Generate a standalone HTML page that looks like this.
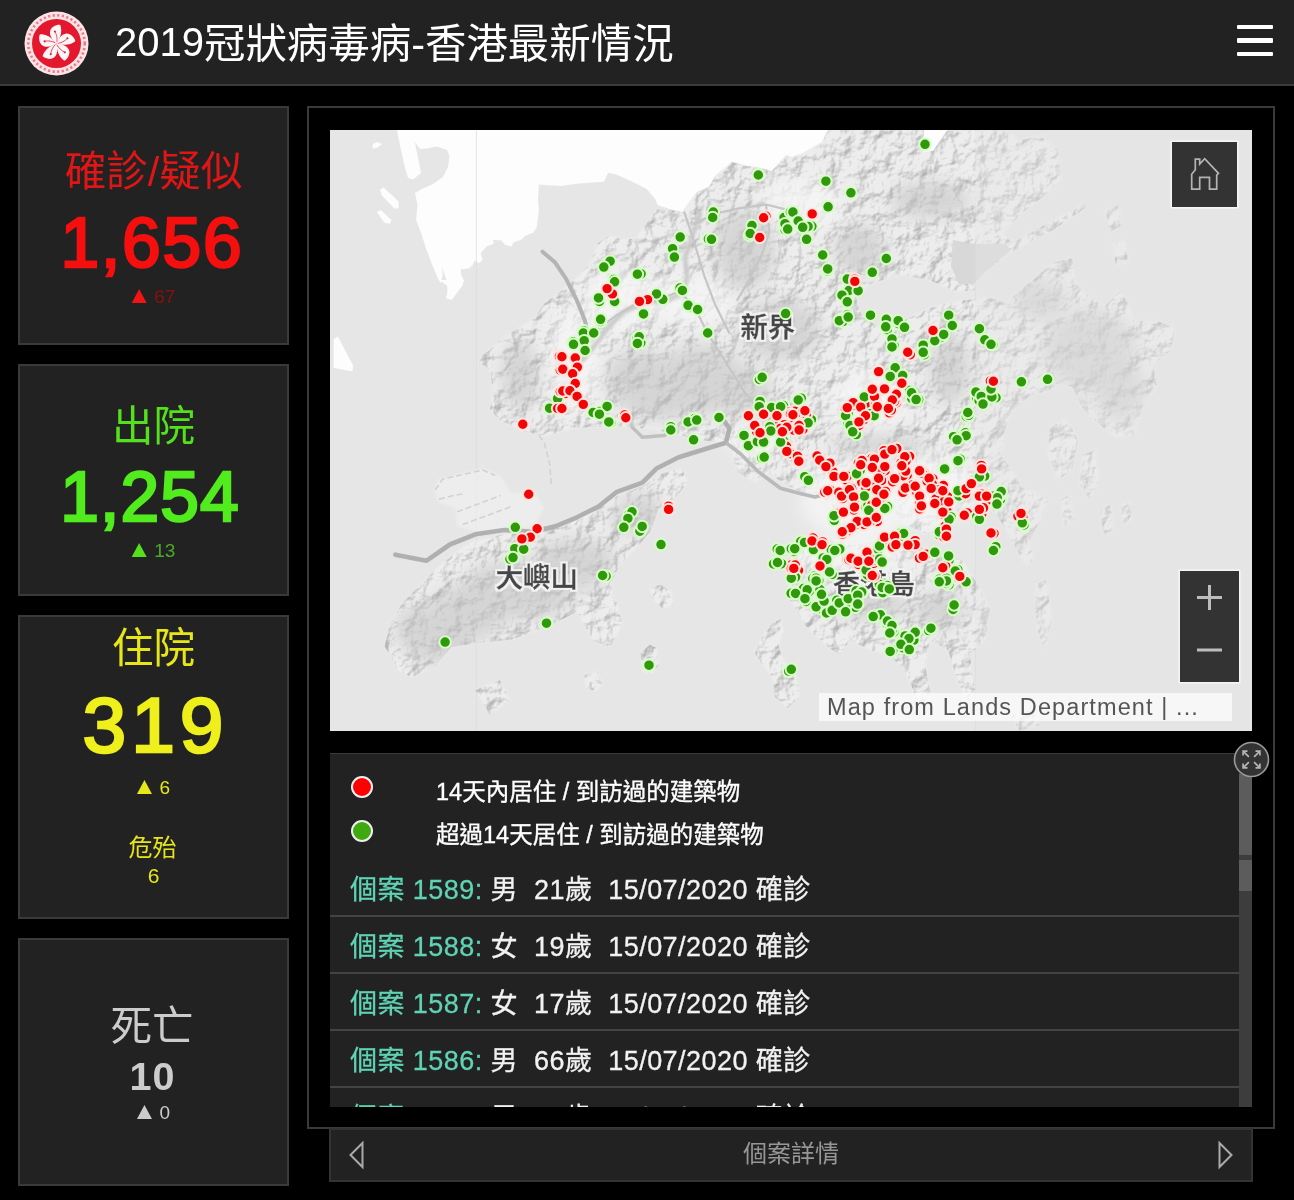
<!DOCTYPE html>
<html lang="zh-Hant">
<head>
<meta charset="utf-8">
<title>2019冠狀病毒病-香港最新情況</title>
<style>
*{box-sizing:border-box;margin:0;padding:0}
html,body{width:1294px;height:1200px;background:#000;overflow:hidden}
body{position:relative;font-family:"Liberation Sans","Noto Sans CJK TC",sans-serif;color:#fff}
.abs{position:absolute}
#hdr{left:0;top:0;width:1294px;height:86px;background:#222;border-bottom:2px solid #3a3a3a}
#title{left:115px;top:16px;font-size:41.45px;line-height:56px;white-space:nowrap;color:#fff;letter-spacing:0}
.burger{left:1237px;width:36px;height:4.6px;background:#fff;border-radius:1px}
.panel{left:18px;width:271px;background:#222;border:2px solid #3a3a3a}
.c{position:absolute;left:0;width:100%;text-align:center;white-space:nowrap}
.lab{font-size:41.5px;line-height:50px}
.num{font-size:69.5px;line-height:70px;font-weight:normal;-webkit-text-stroke:2.6px currentColor;letter-spacing:1.8px}
.sm{font-size:19px;line-height:22px}
.sm i{display:inline-block;width:15px;height:14px;margin-right:7.5px;background:currentColor;clip-path:polygon(50% 0,100% 100%,0 100%);vertical-align:baseline;overflow:hidden;font-size:0;font-style:normal}
#wrap{left:307px;top:106px;width:968px;height:1023px;border:2px solid #3a3a3a;background:#000}
#map{left:330px;top:130px;width:922px;height:601px;background:#e6e6e6;overflow:hidden}
#list{left:330px;top:753px;width:922px;height:354px;background:#222;border-top:1px solid #3a3a3a;overflow:hidden}
.row{position:absolute;left:0;width:909px;height:57px;border-bottom:2px solid #444;font-size:27px;line-height:61px;padding-left:20px;white-space:nowrap;color:#f2f2f2;letter-spacing:.45px;-webkit-text-stroke:.3px}
.row b{font-weight:normal;color:#5fd3b3}
.leg{position:absolute;left:106px;font-size:23.5px;line-height:30px;color:#fff;white-space:nowrap;-webkit-text-stroke:.35px}
.dot{position:absolute;left:20.5px;width:22.5px;height:22.5px;border-radius:50%;border:2px solid #f0f0f0}
#tab{left:329px;top:1128px;width:924px;height:54px;background:#222;border:2px solid #333}
</style>
</head>
<body>
<div id="hdr" class="abs"></div>
<svg class="abs" style="left:24px;top:11px" width="65" height="65" viewBox="-32.5 -32.5 65 65">
<circle r="32" fill="#fbe3e6"/>
<circle r="28.2" fill="none" stroke="#e8566a" stroke-width="2.6" stroke-dasharray="2.2 2.4" opacity=".75"/>
<circle r="24.5" fill="#e3172d"/>
<g id="pet">
<path d="M0 0C-2.2 -2.2 -7.8 -7 -6.3 -12.8C-5.2 -16.4 0 -19.2 3.7 -18.6C5.4 -14.5 4.8 -9 3 -5.5C2.2 -3.5 1 -1.5 0 0Z" fill="#fff5f6"/>
<path d="M0.4 -1.5C0.8 -5 0.4 -8.5 -1.4 -11.6" fill="none" stroke="#e3172d" stroke-width="0.7"/>
<circle cx="-1.6" cy="-12" r="1.05" fill="#c9283a"/>
</g>
<use href="#pet" transform="rotate(72)"/><use href="#pet" transform="rotate(144)"/><use href="#pet" transform="rotate(216)"/><use href="#pet" transform="rotate(288)"/>
</svg>
<div id="title" class="abs"><span style="font-size:40px;position:relative;top:-2.5px">2019</span>冠狀病毒病-香港最新情況</div>
<div class="abs burger" style="top:24.7px"></div>
<div class="abs burger" style="top:38.2px"></div>
<div class="abs burger" style="top:51.7px"></div>

<div class="abs panel" style="top:106px;height:239px;color:#e01616">
  <div class="c lab" style="top:38.5px">確診/疑似</div>
  <div class="c num" style="top:99.5px;left:-1.6px;color:#f50f0f">1,656</div>
  <div class="c sm" style="top:178px;color:#8a1010"><i style="color:#f01414">▲</i>67</div>
</div>
<div class="abs panel" style="top:364px;height:232px;color:#55e01e">
  <div class="c lab" style="top:35.5px">出院</div>
  <div class="c num" style="top:96px;left:-3.5px;letter-spacing:1.1px;color:#52ec1e">1,254</div>
  <div class="c sm" style="top:174px"><i>▲</i><span style="color:#4aaa28">13</span></div>
</div>
<div class="abs panel" style="top:615px;height:304px;color:#e6e619">
  <div class="c lab" style="top:6.5px">住院</div>
  <div class="c num" style="top:66px;left:-.5px;font-size:78.5px;line-height:84px;letter-spacing:5px;text-indent:5px;color:#efef1c">319</div>
  <div class="c sm" style="top:160px"><i>▲</i>6</div>
  <div class="c" style="top:216px;font-size:24px;line-height:30px;left:-1px">危殆</div>
  <div class="c" style="top:246.5px;font-size:21px;line-height:24px">6</div>
</div>
<div class="abs panel" style="top:938px;height:248px;color:#ccc">
  <div class="c lab" style="top:62px;left:-1.5px">死亡</div>
  <div class="c" style="top:113.5px;left:-1px;font-size:39.5px;line-height:44px;font-weight:bold;letter-spacing:1px">10</div>
  <div class="c sm" style="top:162px"><i>▲</i>0</div>
</div>

<div id="wrap" class="abs"></div>
<div id="map" class="abs">
<svg width="922" height="601" viewBox="330 130 922 601" style="position:absolute;left:0;top:0;display:block">
<defs>
<filter id="relief" x="0" y="0" width="100%" height="100%" filterUnits="objectBoundingBox" color-interpolation-filters="sRGB">
<feTurbulence type="fractalNoise" baseFrequency="0.06" numOctaves="4" seed="7" result="n"/>
<feDiffuseLighting in="n" surfaceScale="6" diffuseConstant="1.2" lighting-color="#fff" result="l"><feDistantLight azimuth="225" elevation="52"/></feDiffuseLighting>
<feComposite in="l" in2="SourceAlpha" operator="in"/>
</filter>
<filter id="halo" x="-10%" y="-25%" width="120%" height="150%"><feMorphology in="SourceAlpha" operator="dilate" radius="1.5" result="d"/><feGaussianBlur in="d" stdDeviation="0.5" result="b"/><feFlood flood-color="#f4f4f4" flood-opacity=".95"/><feComposite in2="b" operator="in" result="h"/><feMerge><feMergeNode in="h"/><feMergeNode in="SourceGraphic"/></feMerge></filter>
<filter id="b3"><feGaussianBlur stdDeviation="3"/></filter>
<filter id="b8"><feGaussianBlur stdDeviation="8"/></filter>
<filter id="b1"><feGaussianBlur stdDeviation="0.8"/></filter>
</defs>
<rect x="330" y="130" width="922" height="601" fill="#e6e6e6"/>
<polygon points="476.0,130.0 828.0,130.0 822.0,142.0 803.0,153.0 792.0,157.0 786.0,155.0 772.0,171.0 757.0,167.0 747.0,166.0 732.0,162.0 716.0,175.0 709.0,187.0 697.0,192.0 690.0,201.0 682.0,212.0 668.0,208.5 657.4,205.0 655.6,199.6 646.7,188.9 632.4,181.8 616.3,174.6 608.3,172.8 603.8,181.8 578.9,183.6 561.0,186.0 548.0,185.2 538.9,184.5 538.0,200.0 538.9,210.3 536.6,227.4 533.5,232.4 524.9,236.1 521.2,239.8 513.8,242.3 511.3,246.6 505.1,244.7 501.4,240.4 492.7,239.8 494.0,243.5 486.6,246.6 480.4,253.4 482.8,259.6 479.1,263.3 476.0,261.5" fill="#fdfdfd"/>
<polygon points="397.0,130.0 476.0,130.0 476.0,261.5 474.2,260.8 473.0,264.5 469.2,268.2 460.6,269.5 461.2,274.4 463.7,280.6 460.6,286.8 453.2,296.7 447.6,299.8 447.0,281.8 442.0,267.0 442.7,274.4 440.8,283.1 438.3,279.4 432.1,264.5 426.0,248.4 421.0,232.4 416.1,220.0 417.5,205.0 415.0,193.0 422.0,189.0 433.0,184.0 443.0,177.0 448.0,167.0 449.5,156.0 447.0,150.0 437.0,146.5 427.0,148.5 420.0,149.0 414.0,141.0 412.0,136.0 415.0,143.0 418.5,160.0 421.0,173.0 413.0,179.5 408.0,178.0 404.5,166.0 400.5,148.0" fill="#fdfdfd"/>
<polygon points="372.5,144.3 376.8,142.1 382.1,143.9 376.8,147.9 372.8,148.6" fill="#fdfdfd"/>
<polygon points="380.0,189.8 383.6,187.5 398.7,201.4 398.7,208.5 394.3,208.5 381.8,195.2" fill="#fdfdfd"/>
<polygon points="376.8,212.1 380.9,210.0 391.6,220.2 389.8,223.7 384.4,222.8" fill="#fdfdfd"/>
<polygon points="333.6,338.9 338.0,336.8 353.2,365.7 352.3,371.4 333.6,367.8" fill="#fdfdfd"/>
<polygon points="439.3,280.0 463.9,280.0 462.5,285.4 451.7,300.0 446.0,297.9 449.2,287.1 444.3,283.6" fill="#fdfdfd"/>
<polygon points="924,130 947,130 933,151 923,152" fill="#fdfdfd"/>
<line x1="476.4" y1="130" x2="476.4" y2="731" stroke="#dadada" stroke-width="1" opacity=".7"/>
<line x1="975.5" y1="130" x2="975.5" y2="731" stroke="#dedede" stroke-width="1"/>
<clipPath id="landclip">
<polygon points="658.0,208.0 682.0,212.0 690.0,201.0 697.0,192.0 709.0,187.0 716.0,175.0 732.0,162.0 747.0,166.0 757.0,167.0 772.0,171.0 786.0,155.0 792.0,157.0 803.0,153.0 822.0,142.0 828.0,130.0 924.0,130.0 923.0,152.0 933.0,151.0 947.0,131.0 1000.0,130.0 1015.0,136.0 1030.0,150.0 1045.0,165.0 1060.0,170.0 1062.0,178.0 1045.0,195.0 1020.0,215.0 1003.0,233.0 1012.0,243.0 1050.0,222.0 1085.0,203.0 1086.0,208.0 1050.0,232.0 1012.0,252.0 992.0,266.0 973.0,284.0 975.0,290.0 955.0,292.0 930.0,280.0 900.0,275.0 872.0,283.0 856.0,298.0 862.0,316.0 880.0,328.0 905.0,320.0 935.0,306.0 960.0,301.0 985.0,297.0 1006.0,302.0 1028.0,284.0 1054.0,262.0 1072.0,258.0 1076.0,284.0 1091.0,299.0 1105.0,306.0 1120.0,291.0 1127.0,302.0 1135.0,321.0 1157.0,321.0 1175.0,328.0 1171.0,350.0 1153.0,365.0 1157.0,387.0 1142.0,409.0 1135.0,434.0 1116.0,438.0 1098.0,423.0 1083.0,409.0 1072.0,387.0 1061.0,383.0 1047.0,391.0 1030.0,396.0 1013.0,410.0 1005.0,430.0 1001.0,455.0 1012.0,470.0 1022.0,488.0 1036.0,492.0 1048.0,502.0 1040.0,520.0 1030.0,540.0 1034.0,560.0 1026.0,566.0 1014.0,545.0 1000.0,520.0 985.0,500.0 965.0,505.0 950.0,520.0 930.0,535.0 905.0,525.0 890.0,505.0 875.0,512.0 868.0,530.0 852.0,538.0 838.0,528.0 832.0,505.0 818.0,495.0 800.0,492.0 785.0,484.0 770.0,474.0 755.0,466.0 740.0,455.0 726.0,443.0 700.0,440.0 668.0,432.0 640.0,428.0 610.0,426.0 575.0,428.0 545.0,436.0 522.0,431.0 500.0,420.0 490.0,410.0 493.0,392.0 490.0,370.0 479.0,362.0 483.0,355.0 504.0,337.0 533.0,319.0 544.0,304.0 562.0,290.0 580.0,275.0 591.0,261.0 598.0,243.0 610.0,235.0 621.0,239.0 635.0,239.0 646.0,224.0"/>
<polygon points="399.0,671.6 384.5,646.2 389.9,624.4 402.6,602.6 424.4,580.8 439.0,566.3 468.0,542.7 504.3,534.3 533.4,531.8 562.5,527.1 584.3,513.6 613.3,498.0 642.4,485.7 664.2,472.6 682.3,468.9 687.8,482.7 675.1,498.0 658.7,508.2 651.4,530.0 638.7,545.2 620.6,564.5 610.4,584.4 616.9,602.6 622.4,624.4 609.7,648.0 593.3,640.7 584.3,624.4 577.0,611.7 547.9,626.2 511.6,639.7 475.3,643.3 451.7,646.9 433.5,668.0 411.7,677.1"/>
<polygon points="786.0,560.0 800.0,545.0 830.0,540.0 860.0,544.0 890.0,540.0 915.0,545.0 940.0,552.0 962.0,560.0 978.0,585.0 990.0,610.0 985.0,640.0 970.0,655.0 975.0,690.0 965.0,700.0 955.0,672.0 948.0,650.0 930.0,640.0 925.0,665.0 932.0,700.0 920.0,705.0 905.0,672.0 890.0,655.0 870.0,650.0 850.0,640.0 840.0,655.0 825.0,645.0 805.0,625.0 790.0,600.0"/>
<polygon points="735.0,447.0 752.0,445.0 766.0,458.0 768.0,474.0 755.0,482.0 740.0,475.0 732.0,460.0"/>
<polygon points="755.0,653.5 760.4,638.9 771.3,624.4 780.4,619.0 784.0,631.7 778.6,646.2 784.0,660.7 796.7,675.3 800.0,697.0 787.7,707.9 774.9,697.0 771.3,675.3 762.2,664.4"/>
<polygon points="640.5,653.5 649.6,644.4 656.9,648.0 658.7,664.4 651.4,675.3 642.4,671.6"/>
<polygon points="584.3,675.3 595.1,671.6 602.4,682.5 597.0,691.6 586.1,688.0"/>
<polygon points="649.6,588.1 660.5,584.4 671.4,591.7 673.2,606.2 662.3,608.1 653.3,600.8"/>
<polygon points="1050.0,425.0 1066.0,418.0 1078.0,440.0 1072.0,470.0 1058.0,480.0 1048.0,455.0"/>
<polygon points="1082.0,455.0 1095.0,450.0 1100.0,480.0 1090.0,500.0 1080.0,485.0"/>
<polygon points="1060.0,500.0 1070.0,495.0 1074.0,520.0 1064.0,528.0"/>
<polygon points="1022.0,140.0 1040.0,136.0 1058.0,150.0 1060.0,168.0 1045.0,175.0 1030.0,165.0"/>
<polygon points="1105.0,210.0 1118.0,205.0 1122.0,225.0 1110.0,232.0"/>
<polygon points="1112.0,245.0 1125.0,240.0 1128.0,262.0 1116.0,266.0"/>
<polygon points="1100.0,510.0 1110.0,505.0 1114.0,530.0 1104.0,535.0"/>
<polygon points="1035.0,585.0 1046.0,580.0 1052.0,620.0 1044.0,650.0 1036.0,625.0"/>
<polygon points="1120.0,505.0 1130.0,500.0 1133.0,520.0 1124.0,524.0"/>
<polygon points="1010.0,715.0 1030.0,705.0 1040.0,725.0 1020.0,731.0"/>
<polygon points="475.0,690.0 500.0,680.0 510.0,700.0 490.0,715.0"/>
</clipPath>
<g opacity="0.55" filter="url(#b1)">
<polygon points="658.0,208.0 682.0,212.0 690.0,201.0 697.0,192.0 709.0,187.0 716.0,175.0 732.0,162.0 747.0,166.0 757.0,167.0 772.0,171.0 786.0,155.0 792.0,157.0 803.0,153.0 822.0,142.0 828.0,130.0 924.0,130.0 923.0,152.0 933.0,151.0 947.0,131.0 1000.0,130.0 1015.0,136.0 1030.0,150.0 1045.0,165.0 1060.0,170.0 1062.0,178.0 1045.0,195.0 1020.0,215.0 1003.0,233.0 1012.0,243.0 1050.0,222.0 1085.0,203.0 1086.0,208.0 1050.0,232.0 1012.0,252.0 992.0,266.0 973.0,284.0 975.0,290.0 955.0,292.0 930.0,280.0 900.0,275.0 872.0,283.0 856.0,298.0 862.0,316.0 880.0,328.0 905.0,320.0 935.0,306.0 960.0,301.0 985.0,297.0 1006.0,302.0 1028.0,284.0 1054.0,262.0 1072.0,258.0 1076.0,284.0 1091.0,299.0 1105.0,306.0 1120.0,291.0 1127.0,302.0 1135.0,321.0 1157.0,321.0 1175.0,328.0 1171.0,350.0 1153.0,365.0 1157.0,387.0 1142.0,409.0 1135.0,434.0 1116.0,438.0 1098.0,423.0 1083.0,409.0 1072.0,387.0 1061.0,383.0 1047.0,391.0 1030.0,396.0 1013.0,410.0 1005.0,430.0 1001.0,455.0 1012.0,470.0 1022.0,488.0 1036.0,492.0 1048.0,502.0 1040.0,520.0 1030.0,540.0 1034.0,560.0 1026.0,566.0 1014.0,545.0 1000.0,520.0 985.0,500.0 965.0,505.0 950.0,520.0 930.0,535.0 905.0,525.0 890.0,505.0 875.0,512.0 868.0,530.0 852.0,538.0 838.0,528.0 832.0,505.0 818.0,495.0 800.0,492.0 785.0,484.0 770.0,474.0 755.0,466.0 740.0,455.0 726.0,443.0 700.0,440.0 668.0,432.0 640.0,428.0 610.0,426.0 575.0,428.0 545.0,436.0 522.0,431.0 500.0,420.0 490.0,410.0 493.0,392.0 490.0,370.0 479.0,362.0 483.0,355.0 504.0,337.0 533.0,319.0 544.0,304.0 562.0,290.0 580.0,275.0 591.0,261.0 598.0,243.0 610.0,235.0 621.0,239.0 635.0,239.0 646.0,224.0" fill="#f4f4f4"/>
<polygon points="399.0,671.6 384.5,646.2 389.9,624.4 402.6,602.6 424.4,580.8 439.0,566.3 468.0,542.7 504.3,534.3 533.4,531.8 562.5,527.1 584.3,513.6 613.3,498.0 642.4,485.7 664.2,472.6 682.3,468.9 687.8,482.7 675.1,498.0 658.7,508.2 651.4,530.0 638.7,545.2 620.6,564.5 610.4,584.4 616.9,602.6 622.4,624.4 609.7,648.0 593.3,640.7 584.3,624.4 577.0,611.7 547.9,626.2 511.6,639.7 475.3,643.3 451.7,646.9 433.5,668.0 411.7,677.1" fill="#f4f4f4"/>
<polygon points="786.0,560.0 800.0,545.0 830.0,540.0 860.0,544.0 890.0,540.0 915.0,545.0 940.0,552.0 962.0,560.0 978.0,585.0 990.0,610.0 985.0,640.0 970.0,655.0 975.0,690.0 965.0,700.0 955.0,672.0 948.0,650.0 930.0,640.0 925.0,665.0 932.0,700.0 920.0,705.0 905.0,672.0 890.0,655.0 870.0,650.0 850.0,640.0 840.0,655.0 825.0,645.0 805.0,625.0 790.0,600.0" fill="#f4f4f4"/>
<polygon points="735.0,447.0 752.0,445.0 766.0,458.0 768.0,474.0 755.0,482.0 740.0,475.0 732.0,460.0" fill="#f4f4f4"/>
<polygon points="755.0,653.5 760.4,638.9 771.3,624.4 780.4,619.0 784.0,631.7 778.6,646.2 784.0,660.7 796.7,675.3 800.0,697.0 787.7,707.9 774.9,697.0 771.3,675.3 762.2,664.4" fill="#f4f4f4"/>
<polygon points="640.5,653.5 649.6,644.4 656.9,648.0 658.7,664.4 651.4,675.3 642.4,671.6" fill="#f4f4f4"/>
<polygon points="584.3,675.3 595.1,671.6 602.4,682.5 597.0,691.6 586.1,688.0" fill="#f4f4f4"/>
<polygon points="649.6,588.1 660.5,584.4 671.4,591.7 673.2,606.2 662.3,608.1 653.3,600.8" fill="#f4f4f4"/>
<polygon points="1050.0,425.0 1066.0,418.0 1078.0,440.0 1072.0,470.0 1058.0,480.0 1048.0,455.0" fill="#f4f4f4"/>
<polygon points="1082.0,455.0 1095.0,450.0 1100.0,480.0 1090.0,500.0 1080.0,485.0" fill="#f4f4f4"/>
<polygon points="1060.0,500.0 1070.0,495.0 1074.0,520.0 1064.0,528.0" fill="#f4f4f4"/>
<polygon points="1022.0,140.0 1040.0,136.0 1058.0,150.0 1060.0,168.0 1045.0,175.0 1030.0,165.0" fill="#f4f4f4"/>
<polygon points="1105.0,210.0 1118.0,205.0 1122.0,225.0 1110.0,232.0" fill="#f4f4f4"/>
<polygon points="1112.0,245.0 1125.0,240.0 1128.0,262.0 1116.0,266.0" fill="#f4f4f4"/>
<polygon points="1100.0,510.0 1110.0,505.0 1114.0,530.0 1104.0,535.0" fill="#f4f4f4"/>
<polygon points="1035.0,585.0 1046.0,580.0 1052.0,620.0 1044.0,650.0 1036.0,625.0" fill="#f4f4f4"/>
<polygon points="1120.0,505.0 1130.0,500.0 1133.0,520.0 1124.0,524.0" fill="#f4f4f4"/>
<polygon points="1010.0,715.0 1030.0,705.0 1040.0,725.0 1020.0,731.0" fill="#f4f4f4"/>
<polygon points="475.0,690.0 500.0,680.0 510.0,700.0 490.0,715.0" fill="#f4f4f4"/>
</g>
<g filter="url(#relief)" opacity="0.28" style="mix-blend-mode:multiply">
<rect x="330" y="130" width="1" height="1" fill="none"/><rect x="1251" y="730" width="1" height="1" fill="none"/>
<polygon points="658.0,208.0 682.0,212.0 690.0,201.0 697.0,192.0 709.0,187.0 716.0,175.0 732.0,162.0 747.0,166.0 757.0,167.0 772.0,171.0 786.0,155.0 792.0,157.0 803.0,153.0 822.0,142.0 828.0,130.0 924.0,130.0 923.0,152.0 933.0,151.0 947.0,131.0 1000.0,130.0 1015.0,136.0 1030.0,150.0 1045.0,165.0 1060.0,170.0 1062.0,178.0 1045.0,195.0 1020.0,215.0 1003.0,233.0 1012.0,243.0 1050.0,222.0 1085.0,203.0 1086.0,208.0 1050.0,232.0 1012.0,252.0 992.0,266.0 973.0,284.0 975.0,290.0 955.0,292.0 930.0,280.0 900.0,275.0 872.0,283.0 856.0,298.0 862.0,316.0 880.0,328.0 905.0,320.0 935.0,306.0 960.0,301.0 985.0,297.0 1006.0,302.0 1028.0,284.0 1054.0,262.0 1072.0,258.0 1076.0,284.0 1091.0,299.0 1105.0,306.0 1120.0,291.0 1127.0,302.0 1135.0,321.0 1157.0,321.0 1175.0,328.0 1171.0,350.0 1153.0,365.0 1157.0,387.0 1142.0,409.0 1135.0,434.0 1116.0,438.0 1098.0,423.0 1083.0,409.0 1072.0,387.0 1061.0,383.0 1047.0,391.0 1030.0,396.0 1013.0,410.0 1005.0,430.0 1001.0,455.0 1012.0,470.0 1022.0,488.0 1036.0,492.0 1048.0,502.0 1040.0,520.0 1030.0,540.0 1034.0,560.0 1026.0,566.0 1014.0,545.0 1000.0,520.0 985.0,500.0 965.0,505.0 950.0,520.0 930.0,535.0 905.0,525.0 890.0,505.0 875.0,512.0 868.0,530.0 852.0,538.0 838.0,528.0 832.0,505.0 818.0,495.0 800.0,492.0 785.0,484.0 770.0,474.0 755.0,466.0 740.0,455.0 726.0,443.0 700.0,440.0 668.0,432.0 640.0,428.0 610.0,426.0 575.0,428.0 545.0,436.0 522.0,431.0 500.0,420.0 490.0,410.0 493.0,392.0 490.0,370.0 479.0,362.0 483.0,355.0 504.0,337.0 533.0,319.0 544.0,304.0 562.0,290.0 580.0,275.0 591.0,261.0 598.0,243.0 610.0,235.0 621.0,239.0 635.0,239.0 646.0,224.0" fill="#000"/>
<polygon points="399.0,671.6 384.5,646.2 389.9,624.4 402.6,602.6 424.4,580.8 439.0,566.3 468.0,542.7 504.3,534.3 533.4,531.8 562.5,527.1 584.3,513.6 613.3,498.0 642.4,485.7 664.2,472.6 682.3,468.9 687.8,482.7 675.1,498.0 658.7,508.2 651.4,530.0 638.7,545.2 620.6,564.5 610.4,584.4 616.9,602.6 622.4,624.4 609.7,648.0 593.3,640.7 584.3,624.4 577.0,611.7 547.9,626.2 511.6,639.7 475.3,643.3 451.7,646.9 433.5,668.0 411.7,677.1" fill="#000"/>
<polygon points="786.0,560.0 800.0,545.0 830.0,540.0 860.0,544.0 890.0,540.0 915.0,545.0 940.0,552.0 962.0,560.0 978.0,585.0 990.0,610.0 985.0,640.0 970.0,655.0 975.0,690.0 965.0,700.0 955.0,672.0 948.0,650.0 930.0,640.0 925.0,665.0 932.0,700.0 920.0,705.0 905.0,672.0 890.0,655.0 870.0,650.0 850.0,640.0 840.0,655.0 825.0,645.0 805.0,625.0 790.0,600.0" fill="#000"/>
<polygon points="735.0,447.0 752.0,445.0 766.0,458.0 768.0,474.0 755.0,482.0 740.0,475.0 732.0,460.0" fill="#000"/>
<polygon points="755.0,653.5 760.4,638.9 771.3,624.4 780.4,619.0 784.0,631.7 778.6,646.2 784.0,660.7 796.7,675.3 800.0,697.0 787.7,707.9 774.9,697.0 771.3,675.3 762.2,664.4" fill="#000"/>
<polygon points="640.5,653.5 649.6,644.4 656.9,648.0 658.7,664.4 651.4,675.3 642.4,671.6" fill="#000"/>
<polygon points="584.3,675.3 595.1,671.6 602.4,682.5 597.0,691.6 586.1,688.0" fill="#000"/>
<polygon points="649.6,588.1 660.5,584.4 671.4,591.7 673.2,606.2 662.3,608.1 653.3,600.8" fill="#000"/>
<polygon points="1050.0,425.0 1066.0,418.0 1078.0,440.0 1072.0,470.0 1058.0,480.0 1048.0,455.0" fill="#000"/>
<polygon points="1082.0,455.0 1095.0,450.0 1100.0,480.0 1090.0,500.0 1080.0,485.0" fill="#000"/>
<polygon points="1060.0,500.0 1070.0,495.0 1074.0,520.0 1064.0,528.0" fill="#000"/>
<polygon points="1022.0,140.0 1040.0,136.0 1058.0,150.0 1060.0,168.0 1045.0,175.0 1030.0,165.0" fill="#000"/>
<polygon points="1105.0,210.0 1118.0,205.0 1122.0,225.0 1110.0,232.0" fill="#000"/>
<polygon points="1112.0,245.0 1125.0,240.0 1128.0,262.0 1116.0,266.0" fill="#000"/>
<polygon points="1100.0,510.0 1110.0,505.0 1114.0,530.0 1104.0,535.0" fill="#000"/>
<polygon points="1035.0,585.0 1046.0,580.0 1052.0,620.0 1044.0,650.0 1036.0,625.0" fill="#000"/>
<polygon points="1120.0,505.0 1130.0,500.0 1133.0,520.0 1124.0,524.0" fill="#000"/>
<polygon points="1010.0,715.0 1030.0,705.0 1040.0,725.0 1020.0,731.0" fill="#000"/>
<polygon points="475.0,690.0 500.0,680.0 510.0,700.0 490.0,715.0" fill="#000"/>
</g>
<polygon points="433.5,490.0 439.0,479.1 482.6,468.2 500.7,475.5 511.6,493.6 533.4,490.0 544.3,508.2 533.4,526.3 504.3,531.8 475.3,531.8 457.1,526.3 455.3,508.2 439.0,502.7" fill="#f0f0f0" opacity="0.7" filter="url(#b1)"/>
<g filter="url(#b8)" opacity="0.8">
<ellipse cx="860" cy="500" rx="60" ry="40" fill="#f6f6f6"/>
<ellipse cx="925" cy="490" rx="50" ry="35" fill="#f6f6f6"/>
<ellipse cx="850" cy="555" rx="60" ry="14" fill="#f6f6f6"/>
<ellipse cx="575" cy="360" rx="25" ry="50" fill="#f6f6f6"/>
<ellipse cx="620" cy="300" rx="35" ry="30" fill="#f6f6f6"/>
<ellipse cx="690" cy="300" rx="40" ry="25" fill="#f6f6f6"/>
<ellipse cx="800" cy="205" rx="40" ry="25" fill="#f6f6f6"/>
<ellipse cx="870" cy="400" rx="35" ry="30" fill="#f6f6f6"/>
<ellipse cx="755" cy="440" rx="30" ry="15" fill="#f6f6f6"/>
</g>
<g filter="url(#b8)" opacity="0.55" clip-path="url(#landclip)">
<ellipse cx="505" cy="590" rx="45" ry="28" fill="#c2c2c2"/>
<ellipse cx="575" cy="560" rx="40" ry="22" fill="#c2c2c2"/>
<ellipse cx="440" cy="640" rx="35" ry="25" fill="#c2c2c2"/>
<ellipse cx="520" cy="600" rx="50" ry="20" fill="#c2c2c2"/>
<ellipse cx="560" cy="575" rx="45" ry="18" fill="#c2c2c2"/>
<ellipse cx="420" cy="630" rx="25" ry="25" fill="#c2c2c2"/>
<ellipse cx="640" cy="520" rx="30" ry="14" fill="#c2c2c2"/>
<ellipse cx="470" cy="610" rx="40" ry="25" fill="#c2c2c2"/>
<ellipse cx="700" cy="380" rx="45" ry="35" fill="#c2c2c2"/>
<ellipse cx="520" cy="375" rx="18" ry="35" fill="#c2c2c2"/>
<ellipse cx="640" cy="380" rx="35" ry="30" fill="#c2c2c2"/>
<ellipse cx="780" cy="330" rx="40" ry="30" fill="#c2c2c2"/>
<ellipse cx="950" cy="370" rx="20" ry="35" fill="#c2c2c2"/>
<ellipse cx="930" cy="200" rx="40" ry="18" fill="#c2c2c2"/>
<ellipse cx="860" cy="250" rx="25" ry="25" fill="#c2c2c2"/>
<ellipse cx="745" cy="250" rx="30" ry="40" fill="#c2c2c2"/>
<ellipse cx="640" cy="505" rx="20" ry="12" fill="#c2c2c2"/>
<ellipse cx="535" cy="598" rx="30" ry="10" fill="#c2c2c2"/>
<ellipse cx="470" cy="625" rx="30" ry="14" fill="#c2c2c2"/>
<ellipse cx="1090" cy="350" rx="45" ry="40" fill="#c2c2c2"/>
<ellipse cx="1120" cy="390" rx="25" ry="30" fill="#c2c2c2"/>
<ellipse cx="1040" cy="300" rx="25" ry="20" fill="#c2c2c2"/>
<ellipse cx="880" cy="445" rx="50" ry="10" fill="#c2c2c2"/>
<ellipse cx="870" cy="605" rx="40" ry="14" fill="#c2c2c2"/>
<ellipse cx="940" cy="610" rx="25" ry="18" fill="#c2c2c2"/>
<ellipse cx="660" cy="400" rx="40" ry="20" fill="#c2c2c2"/>
<ellipse cx="740" cy="390" rx="30" ry="25" fill="#c2c2c2"/>
</g>
<polygon points="953,240 973,243.7 1006,243.7 1010,251 991.7,265.7 973,284 958.7,284 951,265.7" fill="#d8d8d8"/>
<rect x="975.5" y="130" width="276.5" height="601" fill="#e6e6e6" opacity=".38"/>
<polyline points="395.4,554.7 426.3,560.8 449.9,544.5 475.3,534.3 504.3,530.0 533.4,531.8 555.2,526.3 577.0,517.3 598.8,506.4 616.9,491.8 642.4,482.7 656.9,468.2 678.7,457.3 707.7,448.2 725.9,442.8 729.5,428.3 724.1,421.0" fill="none" stroke="#b0b0b0" stroke-width="4.6" stroke-linejoin="round" stroke-linecap="round"/>
<polyline points="725.9,442.8 740.4,453.7 758.6,471.9 780.4,488.2 800.0,493.6 815.0,497.0 835.0,492.0" fill="none" stroke="#bababa" stroke-width="3.6" stroke-linejoin="round"/>
<polyline points="631.5,426.4 642.4,437.3 664.2,435.5 675.1,428.3" fill="none" stroke="#c0c0c0" stroke-width="3.5" stroke-linejoin="round"/>
<polyline points="542.5,251.7 555.2,262.6 566.1,278.9 577.0,300.7 584.3,318.9 588.6,333.4" fill="none" stroke="#b4b4b4" stroke-width="4" stroke-linejoin="round" stroke-linecap="round"/>
<polyline points="583.0,360.0 598.0,341.3 609.0,326.5 624.0,311.6 646.2,302.4 668.4,299.6 683.3,293.0 687.0,276.4 685.0,257.8 692.5,235.6 700.0,214.0" fill="none" stroke="#cbcbcb" stroke-width="5" stroke-linejoin="round" stroke-linecap="round" filter="url(#b1)" opacity=".9"/>
<polyline points="588.6,333.4 598.8,328.0 616.9,315.2 635.1,304.3 656.9,300.7 678.7,291.6 693.2,304.3 707.7,333.4 725.9,362.5 744.1,391.5 765.9,416.9" fill="none" stroke="#c6c6c6" stroke-width="2.2" stroke-linejoin="round"/>
<polyline points="684.1,211.7 693.2,239.0 704.1,275.3 715.0,304.3 729.5,333.4" fill="none" stroke="#c6c6c6" stroke-width="2.2" stroke-linejoin="round"/>
<polyline points="693.2,224.4 715.0,213.5 740.4,208.1 765.9,204.5 787.7,209.9" fill="none" stroke="#c6c6c6" stroke-width="2.2" stroke-linejoin="round"/>
<polyline points="765.9,204.5 769.5,231.7 762.2,253.5 747.7,282.6 736.8,300.7" fill="none" stroke="#c6c6c6" stroke-width="2.2" stroke-linejoin="round"/>
<polyline points="435.3,490.0 442.6,479.1 482.6,470.0 495.3,475.5" fill="none" stroke="#d2d2d2" stroke-width="1.6" stroke-dasharray="6 3"/>
<polyline points="439.0,499.1 453.5,495.5 464.4,493.6" fill="none" stroke="#d2d2d2" stroke-width="1.6" stroke-dasharray="6 3"/>
<polyline points="457.1,511.8 500.7,495.5" fill="none" stroke="#d2d2d2" stroke-width="1.6" stroke-dasharray="6 3"/>
<polyline points="462.6,524.5 511.6,506.4" fill="none" stroke="#d2d2d2" stroke-width="1.6" stroke-dasharray="6 3"/>
<polyline points="533.4,428.3 544.3,442.8 549.7,464.6 551.6,486.4" fill="none" stroke="#d2d2d2" stroke-width="1.6" stroke-dasharray="6 3"/>
<text x="740.5" y="336.5" font-family="'Liberation Sans','Noto Sans CJK TC',sans-serif" font-size="27.3" font-weight="500" fill="#454545" stroke="#454545" stroke-width="0.55" filter="url(#halo)">新界</text>
<text x="495.8" y="586.5" font-family="'Liberation Sans','Noto Sans CJK TC',sans-serif" font-size="27.3" font-weight="500" fill="#454545" stroke="#454545" stroke-width="0.55" filter="url(#halo)">大嶼山</text>
<text x="832.8" y="593.5" font-family="'Liberation Sans','Noto Sans CJK TC',sans-serif" font-size="27.3" font-weight="500" fill="#454545" stroke="#454545" stroke-width="0.55" filter="url(#halo)">香港島</text>
<g stroke-width="2">
<circle cx="891.4" cy="477.8" r="5.75" fill="#f00606" stroke="#ffe4de"/>
<circle cx="790.5" cy="453.6" r="5.75" fill="#f00606" stroke="#ffe4de"/>
<circle cx="802.5" cy="541.0" r="5.75" fill="#2f990b" stroke="#d8fcc8"/>
<circle cx="807.8" cy="594.2" r="5.75" fill="#2f990b" stroke="#d8fcc8"/>
<circle cx="981.8" cy="400.4" r="5.75" fill="#2f990b" stroke="#d8fcc8"/>
<circle cx="818.8" cy="580.4" r="5.75" fill="#2f990b" stroke="#d8fcc8"/>
<circle cx="855.6" cy="607.3" r="5.75" fill="#2f990b" stroke="#d8fcc8"/>
<circle cx="947.1" cy="569.3" r="5.75" fill="#f00606" stroke="#ffe4de"/>
<circle cx="866.6" cy="412.6" r="5.75" fill="#f00606" stroke="#ffe4de"/>
<circle cx="900.8" cy="533.0" r="5.75" fill="#2f990b" stroke="#d8fcc8"/>
<circle cx="783.7" cy="441.1" r="5.75" fill="#2f990b" stroke="#d8fcc8"/>
<circle cx="997.8" cy="501.3" r="5.75" fill="#2f990b" stroke="#d8fcc8"/>
<circle cx="918.7" cy="399.6" r="5.75" fill="#2f990b" stroke="#d8fcc8"/>
<circle cx="832.1" cy="574.5" r="5.75" fill="#2f990b" stroke="#d8fcc8"/>
<circle cx="919.5" cy="558.1" r="5.75" fill="#f00606" stroke="#ffe4de"/>
<circle cx="819.5" cy="592.9" r="5.75" fill="#2f990b" stroke="#d8fcc8"/>
<circle cx="897.8" cy="540.4" r="5.75" fill="#f00606" stroke="#ffe4de"/>
<circle cx="811.9" cy="536.9" r="5.75" fill="#f00606" stroke="#ffe4de"/>
<circle cx="872.7" cy="400.0" r="5.75" fill="#f00606" stroke="#ffe4de"/>
<circle cx="907.1" cy="475.5" r="5.75" fill="#f00606" stroke="#ffe4de"/>
<circle cx="1017.9" cy="516.1" r="5.75" fill="#f00606" stroke="#ffe4de"/>
<circle cx="822.3" cy="604.5" r="5.75" fill="#2f990b" stroke="#d8fcc8"/>
<circle cx="990.4" cy="380.9" r="5.75" fill="#f00606" stroke="#ffe4de"/>
<circle cx="887.5" cy="506.6" r="5.75" fill="#2f990b" stroke="#d8fcc8"/>
<circle cx="911.7" cy="398.3" r="5.75" fill="#2f990b" stroke="#d8fcc8"/>
<circle cx="756.7" cy="431.7" r="5.75" fill="#f00606" stroke="#ffe4de"/>
<circle cx="814.0" cy="576.2" r="5.75" fill="#2f990b" stroke="#d8fcc8"/>
<circle cx="637.1" cy="337.9" r="5.75" fill="#2f990b" stroke="#d8fcc8"/>
<circle cx="981.7" cy="514.3" r="5.75" fill="#f00606" stroke="#ffe4de"/>
<circle cx="811.9" cy="226.3" r="5.75" fill="#2f990b" stroke="#d8fcc8"/>
<circle cx="584.0" cy="330.8" r="5.75" fill="#2f990b" stroke="#d8fcc8"/>
<circle cx="924.2" cy="473.0" r="5.75" fill="#f00606" stroke="#ffe4de"/>
<circle cx="980.9" cy="493.2" r="5.75" fill="#f00606" stroke="#ffe4de"/>
<circle cx="796.1" cy="549.5" r="5.75" fill="#2f990b" stroke="#d8fcc8"/>
<circle cx="919.8" cy="503.7" r="5.75" fill="#f00606" stroke="#ffe4de"/>
<circle cx="947.5" cy="496.7" r="5.75" fill="#f00606" stroke="#ffe4de"/>
<circle cx="861.8" cy="482.3" r="5.75" fill="#f00606" stroke="#ffe4de"/>
<circle cx="887.2" cy="329.7" r="5.75" fill="#2f990b" stroke="#d8fcc8"/>
<circle cx="791.7" cy="564.5" r="5.75" fill="#f00606" stroke="#ffe4de"/>
<circle cx="877.3" cy="521.4" r="5.75" fill="#f00606" stroke="#ffe4de"/>
<circle cx="853.0" cy="598.2" r="5.75" fill="#2f990b" stroke="#d8fcc8"/>
<circle cx="842.9" cy="321.6" r="5.75" fill="#2f990b" stroke="#d8fcc8"/>
<circle cx="905.5" cy="468.2" r="5.75" fill="#f00606" stroke="#ffe4de"/>
<circle cx="856.1" cy="590.8" r="5.75" fill="#2f990b" stroke="#d8fcc8"/>
<circle cx="881.7" cy="480.4" r="5.75" fill="#f00606" stroke="#ffe4de"/>
<circle cx="624.6" cy="415.0" r="5.75" fill="#f00606" stroke="#ffe4de"/>
<circle cx="791.6" cy="564.8" r="5.75" fill="#f00606" stroke="#ffe4de"/>
<circle cx="892.7" cy="481.7" r="5.75" fill="#f00606" stroke="#ffe4de"/>
<circle cx="801.2" cy="398.2" r="5.75" fill="#2f990b" stroke="#d8fcc8"/>
<circle cx="955.8" cy="436.1" r="5.75" fill="#2f990b" stroke="#d8fcc8"/>
<circle cx="853.9" cy="510.0" r="5.75" fill="#f00606" stroke="#ffe4de"/>
<circle cx="793.3" cy="212.4" r="5.75" fill="#2f990b" stroke="#d8fcc8"/>
<circle cx="976.6" cy="398.2" r="5.75" fill="#2f990b" stroke="#d8fcc8"/>
<circle cx="878.2" cy="549.3" r="5.75" fill="#2f990b" stroke="#d8fcc8"/>
<circle cx="847.2" cy="559.5" r="5.75" fill="#f00606" stroke="#ffe4de"/>
<circle cx="801.5" cy="423.3" r="5.75" fill="#f00606" stroke="#ffe4de"/>
<circle cx="641.1" cy="273.8" r="5.75" fill="#2f990b" stroke="#d8fcc8"/>
<circle cx="905.1" cy="635.9" r="5.75" fill="#2f990b" stroke="#d8fcc8"/>
<circle cx="848.0" cy="423.8" r="5.75" fill="#2f990b" stroke="#d8fcc8"/>
<circle cx="957.8" cy="569.7" r="5.75" fill="#2f990b" stroke="#d8fcc8"/>
<circle cx="939.3" cy="534.8" r="5.75" fill="#2f990b" stroke="#d8fcc8"/>
<circle cx="981.3" cy="465.4" r="5.75" fill="#f00606" stroke="#ffe4de"/>
<circle cx="909.6" cy="456.5" r="5.75" fill="#f00606" stroke="#ffe4de"/>
<circle cx="830.2" cy="490.2" r="5.75" fill="#f00606" stroke="#ffe4de"/>
<circle cx="858.4" cy="463.0" r="5.75" fill="#f00606" stroke="#ffe4de"/>
<circle cx="817.2" cy="456.0" r="5.75" fill="#f00606" stroke="#ffe4de"/>
<circle cx="879.4" cy="584.2" r="5.75" fill="#2f990b" stroke="#d8fcc8"/>
<circle cx="777.2" cy="549.1" r="5.75" fill="#2f990b" stroke="#d8fcc8"/>
<circle cx="806.1" cy="601.5" r="5.75" fill="#2f990b" stroke="#d8fcc8"/>
<circle cx="846.6" cy="480.1" r="5.75" fill="#f00606" stroke="#ffe4de"/>
<circle cx="851.2" cy="278.6" r="5.75" fill="#f00606" stroke="#ffe4de"/>
<circle cx="988.2" cy="499.8" r="5.75" fill="#f00606" stroke="#ffe4de"/>
<circle cx="889.0" cy="451.9" r="5.75" fill="#f00606" stroke="#ffe4de"/>
<circle cx="609.9" cy="289.5" r="5.75" fill="#f00606" stroke="#ffe4de"/>
<circle cx="932.7" cy="478.5" r="5.75" fill="#f00606" stroke="#ffe4de"/>
<circle cx="865.6" cy="556.2" r="5.75" fill="#f00606" stroke="#ffe4de"/>
<circle cx="795.0" cy="411.3" r="5.75" fill="#f00606" stroke="#ffe4de"/>
<circle cx="644.6" cy="300.7" r="5.75" fill="#f00606" stroke="#ffe4de"/>
<circle cx="871.5" cy="520.3" r="5.75" fill="#f00606" stroke="#ffe4de"/>
<circle cx="981.9" cy="494.2" r="5.75" fill="#f00606" stroke="#ffe4de"/>
<circle cx="845.4" cy="607.1" r="5.75" fill="#2f990b" stroke="#d8fcc8"/>
<circle cx="858.3" cy="564.5" r="5.75" fill="#f00606" stroke="#ffe4de"/>
<circle cx="668.5" cy="506.2" r="5.75" fill="#f00606" stroke="#ffe4de"/>
<circle cx="875.6" cy="616.3" r="5.75" fill="#2f990b" stroke="#d8fcc8"/>
<circle cx="983.5" cy="507.8" r="5.75" fill="#f00606" stroke="#ffe4de"/>
<circle cx="824.8" cy="492.2" r="5.75" fill="#f00606" stroke="#ffe4de"/>
<circle cx="887.1" cy="585.4" r="5.75" fill="#2f990b" stroke="#d8fcc8"/>
<circle cx="936.0" cy="498.8" r="5.75" fill="#f00606" stroke="#ffe4de"/>
<circle cx="873.5" cy="563.3" r="5.75" fill="#f00606" stroke="#ffe4de"/>
<circle cx="892.3" cy="546.9" r="5.75" fill="#f00606" stroke="#ffe4de"/>
<circle cx="595.5" cy="412.3" r="5.75" fill="#2f990b" stroke="#d8fcc8"/>
<circle cx="836.8" cy="600.3" r="5.75" fill="#2f990b" stroke="#d8fcc8"/>
<circle cx="846.7" cy="531.5" r="5.75" fill="#f00606" stroke="#ffe4de"/>
<circle cx="967.6" cy="513.0" r="5.75" fill="#f00606" stroke="#ffe4de"/>
<circle cx="785.0" cy="229.7" r="5.75" fill="#2f990b" stroke="#d8fcc8"/>
<circle cx="856.3" cy="434.6" r="5.75" fill="#2f990b" stroke="#d8fcc8"/>
<circle cx="898.6" cy="323.7" r="5.75" fill="#2f990b" stroke="#d8fcc8"/>
<circle cx="945.1" cy="575.1" r="5.75" fill="#2f990b" stroke="#d8fcc8"/>
<circle cx="865.3" cy="404.5" r="5.75" fill="#f00606" stroke="#ffe4de"/>
<circle cx="768.5" cy="431.3" r="5.75" fill="#2f990b" stroke="#d8fcc8"/>
<circle cx="606.1" cy="576.2" r="5.75" fill="#2f990b" stroke="#d8fcc8"/>
<circle cx="1022.8" cy="516.9" r="5.75" fill="#f00606" stroke="#ffe4de"/>
<circle cx="872.5" cy="487.2" r="5.75" fill="#f00606" stroke="#ffe4de"/>
<circle cx="916.8" cy="492.3" r="5.75" fill="#f00606" stroke="#ffe4de"/>
<circle cx="798.5" cy="570.3" r="5.75" fill="#f00606" stroke="#ffe4de"/>
<circle cx="949.3" cy="559.8" r="5.75" fill="#2f990b" stroke="#d8fcc8"/>
<circle cx="839.8" cy="549.1" r="5.75" fill="#2f990b" stroke="#d8fcc8"/>
<circle cx="873.1" cy="560.3" r="5.75" fill="#f00606" stroke="#ffe4de"/>
<circle cx="842.7" cy="498.4" r="5.75" fill="#f00606" stroke="#ffe4de"/>
<circle cx="694.6" cy="418.5" r="5.75" fill="#2f990b" stroke="#d8fcc8"/>
<circle cx="941.4" cy="337.1" r="5.75" fill="#2f990b" stroke="#d8fcc8"/>
<circle cx="993.0" cy="344.7" r="5.75" fill="#2f990b" stroke="#d8fcc8"/>
<circle cx="944.2" cy="501.4" r="5.75" fill="#f00606" stroke="#ffe4de"/>
<circle cx="761.3" cy="409.7" r="5.75" fill="#2f990b" stroke="#d8fcc8"/>
<circle cx="823.1" cy="566.0" r="5.75" fill="#f00606" stroke="#ffe4de"/>
<circle cx="802.9" cy="429.5" r="5.75" fill="#f00606" stroke="#ffe4de"/>
<circle cx="871.7" cy="458.5" r="5.75" fill="#f00606" stroke="#ffe4de"/>
<circle cx="884.0" cy="450.7" r="5.75" fill="#f00606" stroke="#ffe4de"/>
<circle cx="960.2" cy="459.2" r="5.75" fill="#2f990b" stroke="#d8fcc8"/>
<circle cx="946.8" cy="510.6" r="5.75" fill="#f00606" stroke="#ffe4de"/>
<circle cx="959.1" cy="496.0" r="5.75" fill="#2f990b" stroke="#d8fcc8"/>
<circle cx="919.7" cy="508.9" r="5.75" fill="#f00606" stroke="#ffe4de"/>
<circle cx="833.8" cy="518.4" r="5.75" fill="#2f990b" stroke="#d8fcc8"/>
<circle cx="949.0" cy="584.8" r="5.75" fill="#2f990b" stroke="#d8fcc8"/>
<circle cx="976.8" cy="516.3" r="5.75" fill="#2f990b" stroke="#d8fcc8"/>
<circle cx="893.8" cy="632.2" r="5.75" fill="#2f990b" stroke="#d8fcc8"/>
<circle cx="809.2" cy="591.4" r="5.75" fill="#2f990b" stroke="#d8fcc8"/>
<circle cx="800.7" cy="541.6" r="5.75" fill="#2f990b" stroke="#d8fcc8"/>
<circle cx="690.3" cy="306.7" r="5.75" fill="#2f990b" stroke="#d8fcc8"/>
<circle cx="873.5" cy="465.1" r="5.75" fill="#f00606" stroke="#ffe4de"/>
<circle cx="867.4" cy="574.9" r="5.75" fill="#2f990b" stroke="#d8fcc8"/>
<circle cx="838.8" cy="492.3" r="5.75" fill="#f00606" stroke="#ffe4de"/>
<circle cx="848.1" cy="413.1" r="5.75" fill="#2f990b" stroke="#d8fcc8"/>
<circle cx="945.6" cy="565.9" r="5.75" fill="#f00606" stroke="#ffe4de"/>
<circle cx="864.0" cy="524.5" r="5.75" fill="#f00606" stroke="#ffe4de"/>
<circle cx="932.3" cy="484.2" r="5.75" fill="#f00606" stroke="#ffe4de"/>
<circle cx="896.8" cy="448.6" r="5.75" fill="#f00606" stroke="#ffe4de"/>
<circle cx="854.7" cy="503.8" r="5.75" fill="#f00606" stroke="#ffe4de"/>
<circle cx="865.9" cy="506.8" r="5.75" fill="#2f990b" stroke="#d8fcc8"/>
<circle cx="829.8" cy="610.1" r="5.75" fill="#2f990b" stroke="#d8fcc8"/>
<circle cx="945.3" cy="525.9" r="5.75" fill="#f00606" stroke="#ffe4de"/>
<circle cx="797.5" cy="456.2" r="5.75" fill="#f00606" stroke="#ffe4de"/>
<circle cx="885.5" cy="491.4" r="5.75" fill="#f00606" stroke="#ffe4de"/>
<circle cx="785.9" cy="226.0" r="5.75" fill="#2f990b" stroke="#d8fcc8"/>
<circle cx="852.7" cy="492.8" r="5.75" fill="#f00606" stroke="#ffe4de"/>
<circle cx="831.3" cy="549.6" r="5.75" fill="#2f990b" stroke="#d8fcc8"/>
<circle cx="832.8" cy="471.7" r="5.75" fill="#f00606" stroke="#ffe4de"/>
<circle cx="994.0" cy="533.3" r="5.75" fill="#f00606" stroke="#ffe4de"/>
<circle cx="565.5" cy="393.4" r="5.75" fill="#f00606" stroke="#ffe4de"/>
<circle cx="573.2" cy="342.1" r="5.75" fill="#2f990b" stroke="#d8fcc8"/>
<circle cx="629.3" cy="513.4" r="5.75" fill="#2f990b" stroke="#d8fcc8"/>
<circle cx="680.1" cy="287.9" r="5.75" fill="#2f990b" stroke="#d8fcc8"/>
<circle cx="851.6" cy="488.4" r="5.75" fill="#f00606" stroke="#ffe4de"/>
<circle cx="855.0" cy="524.8" r="5.75" fill="#f00606" stroke="#ffe4de"/>
<circle cx="852.9" cy="284.2" r="5.75" fill="#f00606" stroke="#ffe4de"/>
<circle cx="777.0" cy="421.0" r="5.75" fill="#f00606" stroke="#ffe4de"/>
<circle cx="781.6" cy="563.7" r="5.75" fill="#2f990b" stroke="#d8fcc8"/>
<circle cx="939.3" cy="579.2" r="5.75" fill="#2f990b" stroke="#d8fcc8"/>
<circle cx="885.8" cy="588.2" r="5.75" fill="#2f990b" stroke="#d8fcc8"/>
<circle cx="867.9" cy="505.5" r="5.75" fill="#2f990b" stroke="#d8fcc8"/>
<circle cx="852.6" cy="405.4" r="5.75" fill="#f00606" stroke="#ffe4de"/>
<circle cx="860.1" cy="470.4" r="5.75" fill="#2f990b" stroke="#d8fcc8"/>
<circle cx="840.2" cy="512.5" r="5.75" fill="#f00606" stroke="#ffe4de"/>
<circle cx="885.1" cy="470.7" r="5.75" fill="#f00606" stroke="#ffe4de"/>
<circle cx="943.7" cy="536.8" r="5.75" fill="#f00606" stroke="#ffe4de"/>
<circle cx="820.0" cy="589.6" r="5.75" fill="#2f990b" stroke="#d8fcc8"/>
<circle cx="910.2" cy="354.7" r="5.75" fill="#f00606" stroke="#ffe4de"/>
<circle cx="894.1" cy="345.7" r="5.75" fill="#2f990b" stroke="#d8fcc8"/>
<circle cx="874.4" cy="463.1" r="5.75" fill="#f00606" stroke="#ffe4de"/>
<circle cx="785.0" cy="423.7" r="5.75" fill="#f00606" stroke="#ffe4de"/>
<circle cx="979.1" cy="400.7" r="5.75" fill="#2f990b" stroke="#d8fcc8"/>
<circle cx="953.1" cy="609.4" r="5.75" fill="#2f990b" stroke="#d8fcc8"/>
<circle cx="902.8" cy="647.7" r="5.75" fill="#2f990b" stroke="#d8fcc8"/>
<circle cx="889.4" cy="412.8" r="5.75" fill="#f00606" stroke="#ffe4de"/>
<circle cx="892.0" cy="630.6" r="5.75" fill="#2f990b" stroke="#d8fcc8"/>
<circle cx="1024.1" cy="525.0" r="5.75" fill="#2f990b" stroke="#d8fcc8"/>
<circle cx="927.3" cy="481.4" r="5.75" fill="#f00606" stroke="#ffe4de"/>
<circle cx="862.0" cy="460.5" r="5.75" fill="#f00606" stroke="#ffe4de"/>
<circle cx="882.8" cy="592.7" r="5.75" fill="#2f990b" stroke="#d8fcc8"/>
<circle cx="863.6" cy="419.9" r="5.75" fill="#f00606" stroke="#ffe4de"/>
<circle cx="823.2" cy="557.9" r="5.75" fill="#2f990b" stroke="#d8fcc8"/>
<circle cx="901.0" cy="536.1" r="5.75" fill="#2f990b" stroke="#d8fcc8"/>
<circle cx="845.5" cy="409.6" r="5.75" fill="#f00606" stroke="#ffe4de"/>
<circle cx="610.4" cy="291.9" r="5.75" fill="#f00606" stroke="#ffe4de"/>
<circle cx="759.4" cy="379.5" r="5.75" fill="#2f990b" stroke="#d8fcc8"/>
<circle cx="913.0" cy="484.7" r="5.75" fill="#f00606" stroke="#ffe4de"/>
<circle cx="640.8" cy="342.8" r="5.75" fill="#2f990b" stroke="#d8fcc8"/>
<circle cx="887.3" cy="624.7" r="5.75" fill="#2f990b" stroke="#d8fcc8"/>
<circle cx="708.4" cy="239.1" r="5.75" fill="#2f990b" stroke="#d8fcc8"/>
<circle cx="848.9" cy="559.7" r="5.75" fill="#f00606" stroke="#ffe4de"/>
<circle cx="781.3" cy="413.2" r="5.75" fill="#f00606" stroke="#ffe4de"/>
<circle cx="905.9" cy="460.9" r="5.75" fill="#f00606" stroke="#ffe4de"/>
<circle cx="896.4" cy="402.9" r="5.75" fill="#f00606" stroke="#ffe4de"/>
<circle cx="813.0" cy="538.1" r="5.75" fill="#f00606" stroke="#ffe4de"/>
<circle cx="870.3" cy="413.8" r="5.75" fill="#2f990b" stroke="#d8fcc8"/>
<circle cx="509.9" cy="559.1" r="5.75" fill="#2f990b" stroke="#d8fcc8"/>
<circle cx="827.2" cy="271.0" r="5.75" fill="#2f990b" stroke="#d8fcc8"/>
<circle cx="926.5" cy="554.2" r="5.75" fill="#f00606" stroke="#ffe4de"/>
<circle cx="847.3" cy="476.2" r="5.75" fill="#f00606" stroke="#ffe4de"/>
<circle cx="992.8" cy="496.3" r="5.75" fill="#2f990b" stroke="#d8fcc8"/>
<circle cx="966.4" cy="416.7" r="5.75" fill="#2f990b" stroke="#d8fcc8"/>
<circle cx="953.6" cy="436.7" r="5.75" fill="#2f990b" stroke="#d8fcc8"/>
<circle cx="760.1" cy="442.2" r="5.75" fill="#2f990b" stroke="#d8fcc8"/>
<circle cx="854.2" cy="499.9" r="5.75" fill="#f00606" stroke="#ffe4de"/>
<circle cx="882.4" cy="540.9" r="5.75" fill="#f00606" stroke="#ffe4de"/>
<circle cx="996.0" cy="397.7" r="5.75" fill="#2f990b" stroke="#d8fcc8"/>
<circle cx="782.3" cy="411.0" r="5.75" fill="#2f990b" stroke="#d8fcc8"/>
<circle cx="559.5" cy="355.4" r="5.75" fill="#f00606" stroke="#ffe4de"/>
<circle cx="943.3" cy="485.6" r="5.75" fill="#f00606" stroke="#ffe4de"/>
<circle cx="821.0" cy="608.8" r="5.75" fill="#2f990b" stroke="#d8fcc8"/>
<circle cx="804.8" cy="476.7" r="5.75" fill="#2f990b" stroke="#d8fcc8"/>
<circle cx="946.5" cy="583.4" r="5.75" fill="#2f990b" stroke="#d8fcc8"/>
<circle cx="997.8" cy="501.7" r="5.75" fill="#2f990b" stroke="#d8fcc8"/>
<circle cx="789.9" cy="417.8" r="5.75" fill="#f00606" stroke="#ffe4de"/>
<circle cx="784.4" cy="424.7" r="5.75" fill="#f00606" stroke="#ffe4de"/>
<circle cx="749.5" cy="235.5" r="5.75" fill="#2f990b" stroke="#d8fcc8"/>
<circle cx="600.6" cy="321.5" r="5.75" fill="#2f990b" stroke="#d8fcc8"/>
<circle cx="881.6" cy="469.8" r="5.75" fill="#f00606" stroke="#ffe4de"/>
<circle cx="599.8" cy="411.6" r="5.75" fill="#2f990b" stroke="#d8fcc8"/>
<circle cx="928.7" cy="630.6" r="5.75" fill="#2f990b" stroke="#d8fcc8"/>
<circle cx="826.3" cy="609.4" r="5.75" fill="#2f990b" stroke="#d8fcc8"/>
<circle cx="610.7" cy="422.9" r="5.75" fill="#2f990b" stroke="#d8fcc8"/>
<circle cx="861.7" cy="592.1" r="5.75" fill="#2f990b" stroke="#d8fcc8"/>
<circle cx="783.4" cy="405.6" r="5.75" fill="#2f990b" stroke="#d8fcc8"/>
<circle cx="922.2" cy="473.2" r="5.75" fill="#f00606" stroke="#ffe4de"/>
<circle cx="891.3" cy="410.1" r="5.75" fill="#f00606" stroke="#ffe4de"/>
<circle cx="909.7" cy="390.6" r="5.75" fill="#2f990b" stroke="#d8fcc8"/>
<circle cx="1000.5" cy="499.6" r="5.75" fill="#2f990b" stroke="#d8fcc8"/>
<circle cx="773.5" cy="563.9" r="5.75" fill="#2f990b" stroke="#d8fcc8"/>
<circle cx="943.7" cy="514.6" r="5.75" fill="#f00606" stroke="#ffe4de"/>
<circle cx="965.6" cy="493.7" r="5.75" fill="#f00606" stroke="#ffe4de"/>
<circle cx="901.0" cy="462.9" r="5.75" fill="#f00606" stroke="#ffe4de"/>
<circle cx="879.6" cy="559.1" r="5.75" fill="#2f990b" stroke="#d8fcc8"/>
<circle cx="795.6" cy="577.1" r="5.75" fill="#2f990b" stroke="#d8fcc8"/>
<circle cx="913.9" cy="640.1" r="5.75" fill="#2f990b" stroke="#d8fcc8"/>
<circle cx="874.7" cy="576.2" r="5.75" fill="#f00606" stroke="#ffe4de"/>
<circle cx="922.9" cy="348.0" r="5.75" fill="#2f990b" stroke="#d8fcc8"/>
<circle cx="903.2" cy="475.7" r="5.75" fill="#f00606" stroke="#ffe4de"/>
<circle cx="892.8" cy="650.5" r="5.75" fill="#2f990b" stroke="#d8fcc8"/>
<circle cx="858.9" cy="425.4" r="5.75" fill="#f00606" stroke="#ffe4de"/>
<circle cx="865.8" cy="487.7" r="5.75" fill="#f00606" stroke="#ffe4de"/>
<circle cx="951.0" cy="516.9" r="5.75" fill="#2f990b" stroke="#d8fcc8"/>
<circle cx="915.2" cy="540.7" r="5.75" fill="#f00606" stroke="#ffe4de"/>
<circle cx="842.5" cy="534.2" r="5.75" fill="#f00606" stroke="#ffe4de"/>
<circle cx="995.8" cy="546.7" r="5.75" fill="#2f990b" stroke="#d8fcc8"/>
<circle cx="802.1" cy="412.9" r="5.75" fill="#f00606" stroke="#ffe4de"/>
<circle cx="890.1" cy="627.4" r="5.75" fill="#2f990b" stroke="#d8fcc8"/>
<circle cx="965.4" cy="432.8" r="5.75" fill="#2f990b" stroke="#d8fcc8"/>
<circle cx="829.9" cy="463.2" r="5.75" fill="#f00606" stroke="#ffe4de"/>
<circle cx="968.7" cy="415.3" r="5.75" fill="#2f990b" stroke="#d8fcc8"/>
<circle cx="984.7" cy="476.1" r="5.75" fill="#2f990b" stroke="#d8fcc8"/>
<circle cx="761.8" cy="457.9" r="5.75" fill="#2f990b" stroke="#d8fcc8"/>
<circle cx="786.4" cy="446.3" r="5.75" fill="#f00606" stroke="#ffe4de"/>
<circle cx="822.7" cy="541.9" r="5.75" fill="#f00606" stroke="#ffe4de"/>
<circle cx="795.2" cy="565.1" r="5.75" fill="#f00606" stroke="#ffe4de"/>
<circle cx="871.4" cy="392.0" r="5.75" fill="#f00606" stroke="#ffe4de"/>
<circle cx="836.0" cy="607.3" r="5.75" fill="#2f990b" stroke="#d8fcc8"/>
<circle cx="812.8" cy="578.7" r="5.75" fill="#2f990b" stroke="#d8fcc8"/>
<circle cx="811.4" cy="419.7" r="5.75" fill="#2f990b" stroke="#d8fcc8"/>
<circle cx="871.8" cy="504.9" r="5.75" fill="#f00606" stroke="#ffe4de"/>
<circle cx="903.0" cy="492.3" r="5.75" fill="#f00606" stroke="#ffe4de"/>
<circle cx="806.3" cy="414.5" r="5.75" fill="#f00606" stroke="#ffe4de"/>
<circle cx="999.0" cy="496.2" r="5.75" fill="#2f990b" stroke="#d8fcc8"/>
<circle cx="882.9" cy="496.7" r="5.75" fill="#f00606" stroke="#ffe4de"/>
<circle cx="765.9" cy="216.2" r="5.75" fill="#f00606" stroke="#ffe4de"/>
<circle cx="894.6" cy="401.3" r="5.75" fill="#f00606" stroke="#ffe4de"/>
<circle cx="882.3" cy="390.0" r="5.75" fill="#f00606" stroke="#ffe4de"/>
<circle cx="793.8" cy="551.5" r="5.75" fill="#2f990b" stroke="#d8fcc8"/>
<circle cx="847.5" cy="314.7" r="5.75" fill="#2f990b" stroke="#d8fcc8"/>
<circle cx="834.3" cy="520.3" r="5.75" fill="#2f990b" stroke="#d8fcc8"/>
<circle cx="857.3" cy="601.5" r="5.75" fill="#2f990b" stroke="#d8fcc8"/>
<circle cx="793.9" cy="430.1" r="5.75" fill="#f00606" stroke="#ffe4de"/>
<circle cx="947.5" cy="581.1" r="5.75" fill="#2f990b" stroke="#d8fcc8"/>
<circle cx="599.4" cy="301.4" r="5.75" fill="#2f990b" stroke="#d8fcc8"/>
<circle cx="939.5" cy="489.7" r="5.75" fill="#f00606" stroke="#ffe4de"/>
<circle cx="780.6" cy="428.4" r="5.75" fill="#f00606" stroke="#ffe4de"/>
<circle cx="876.0" cy="403.7" r="5.75" fill="#f00606" stroke="#ffe4de"/>
<circle cx="788.7" cy="671.2" r="5.75" fill="#2f990b" stroke="#d8fcc8"/>
<circle cx="924.4" cy="354.7" r="5.75" fill="#2f990b" stroke="#d8fcc8"/>
<circle cx="788.5" cy="412.3" r="5.75" fill="#f00606" stroke="#ffe4de"/>
<circle cx="791.1" cy="593.3" r="5.75" fill="#2f990b" stroke="#d8fcc8"/>
<circle cx="803.5" cy="588.5" r="5.75" fill="#2f990b" stroke="#d8fcc8"/>
<circle cx="758.3" cy="175.0" r="5.75" fill="#2f990b" stroke="#d8fcc8"/>
<circle cx="713.3" cy="212.1" r="5.75" fill="#2f990b" stroke="#d8fcc8"/>
<circle cx="712.7" cy="217.5" r="5.75" fill="#2f990b" stroke="#d8fcc8"/>
<circle cx="680.2" cy="237.1" r="5.75" fill="#2f990b" stroke="#d8fcc8"/>
<circle cx="672.6" cy="248.7" r="5.75" fill="#2f990b" stroke="#d8fcc8"/>
<circle cx="674.4" cy="257.1" r="5.75" fill="#2f990b" stroke="#d8fcc8"/>
<circle cx="711.5" cy="239.3" r="5.75" fill="#2f990b" stroke="#d8fcc8"/>
<circle cx="752.0" cy="225.5" r="5.75" fill="#2f990b" stroke="#d8fcc8"/>
<circle cx="750.2" cy="233.5" r="5.75" fill="#2f990b" stroke="#d8fcc8"/>
<circle cx="610.1" cy="261.2" r="5.75" fill="#2f990b" stroke="#d8fcc8"/>
<circle cx="603.8" cy="267.1" r="5.75" fill="#2f990b" stroke="#d8fcc8"/>
<circle cx="637.4" cy="274.2" r="5.75" fill="#2f990b" stroke="#d8fcc8"/>
<circle cx="613.7" cy="279.6" r="5.75" fill="#2f990b" stroke="#d8fcc8"/>
<circle cx="784.1" cy="217.5" r="5.75" fill="#2f990b" stroke="#d8fcc8"/>
<circle cx="790.4" cy="212.1" r="5.75" fill="#2f990b" stroke="#d8fcc8"/>
<circle cx="785.0" cy="223.7" r="5.75" fill="#2f990b" stroke="#d8fcc8"/>
<circle cx="787.7" cy="229.1" r="5.75" fill="#2f990b" stroke="#d8fcc8"/>
<circle cx="925.0" cy="144.3" r="5.75" fill="#2f990b" stroke="#d8fcc8"/>
<circle cx="825.9" cy="181.2" r="5.75" fill="#2f990b" stroke="#d8fcc8"/>
<circle cx="850.9" cy="192.8" r="5.75" fill="#2f990b" stroke="#d8fcc8"/>
<circle cx="828.1" cy="206.8" r="5.75" fill="#2f990b" stroke="#d8fcc8"/>
<circle cx="792.9" cy="212.1" r="5.75" fill="#2f990b" stroke="#d8fcc8"/>
<circle cx="798.2" cy="221.0" r="5.75" fill="#2f990b" stroke="#d8fcc8"/>
<circle cx="808.1" cy="226.4" r="5.75" fill="#2f990b" stroke="#d8fcc8"/>
<circle cx="802.7" cy="227.3" r="5.75" fill="#2f990b" stroke="#d8fcc8"/>
<circle cx="806.6" cy="239.3" r="5.75" fill="#2f990b" stroke="#d8fcc8"/>
<circle cx="822.7" cy="255.0" r="5.75" fill="#2f990b" stroke="#d8fcc8"/>
<circle cx="827.7" cy="268.9" r="5.75" fill="#2f990b" stroke="#d8fcc8"/>
<circle cx="886.3" cy="258.5" r="5.75" fill="#2f990b" stroke="#d8fcc8"/>
<circle cx="872.3" cy="272.3" r="5.75" fill="#2f990b" stroke="#d8fcc8"/>
<circle cx="847.3" cy="279.1" r="5.75" fill="#2f990b" stroke="#d8fcc8"/>
<circle cx="557.6" cy="398.7" r="5.75" fill="#2f990b" stroke="#d8fcc8"/>
<circle cx="549.6" cy="408.2" r="5.75" fill="#2f990b" stroke="#d8fcc8"/>
<circle cx="614.6" cy="281.8" r="5.75" fill="#2f990b" stroke="#d8fcc8"/>
<circle cx="598.5" cy="297.9" r="5.75" fill="#2f990b" stroke="#d8fcc8"/>
<circle cx="614.6" cy="301.4" r="5.75" fill="#2f990b" stroke="#d8fcc8"/>
<circle cx="662.8" cy="299.3" r="5.75" fill="#2f990b" stroke="#d8fcc8"/>
<circle cx="656.5" cy="293.9" r="5.75" fill="#2f990b" stroke="#d8fcc8"/>
<circle cx="682.4" cy="290.4" r="5.75" fill="#2f990b" stroke="#d8fcc8"/>
<circle cx="688.1" cy="305.3" r="5.75" fill="#2f990b" stroke="#d8fcc8"/>
<circle cx="697.6" cy="309.5" r="5.75" fill="#2f990b" stroke="#d8fcc8"/>
<circle cx="643.5" cy="313.9" r="5.75" fill="#2f990b" stroke="#d8fcc8"/>
<circle cx="600.6" cy="319.3" r="5.75" fill="#2f990b" stroke="#d8fcc8"/>
<circle cx="583.3" cy="333.0" r="5.75" fill="#2f990b" stroke="#d8fcc8"/>
<circle cx="593.7" cy="333.0" r="5.75" fill="#2f990b" stroke="#d8fcc8"/>
<circle cx="584.2" cy="340.7" r="5.75" fill="#2f990b" stroke="#d8fcc8"/>
<circle cx="573.5" cy="344.3" r="5.75" fill="#2f990b" stroke="#d8fcc8"/>
<circle cx="585.1" cy="350.5" r="5.75" fill="#2f990b" stroke="#d8fcc8"/>
<circle cx="639.2" cy="336.8" r="5.75" fill="#2f990b" stroke="#d8fcc8"/>
<circle cx="637.4" cy="343.4" r="5.75" fill="#2f990b" stroke="#d8fcc8"/>
<circle cx="707.7" cy="333.0" r="5.75" fill="#2f990b" stroke="#d8fcc8"/>
<circle cx="785.6" cy="313.6" r="5.75" fill="#2f990b" stroke="#d8fcc8"/>
<circle cx="762.2" cy="377.3" r="5.75" fill="#2f990b" stroke="#d8fcc8"/>
<circle cx="607.1" cy="406.4" r="5.75" fill="#2f990b" stroke="#d8fcc8"/>
<circle cx="593.1" cy="412.5" r="5.75" fill="#2f990b" stroke="#d8fcc8"/>
<circle cx="599.4" cy="414.2" r="5.75" fill="#2f990b" stroke="#d8fcc8"/>
<circle cx="608.8" cy="421.9" r="5.75" fill="#2f990b" stroke="#d8fcc8"/>
<circle cx="688.1" cy="421.9" r="5.75" fill="#2f990b" stroke="#d8fcc8"/>
<circle cx="696.7" cy="420.1" r="5.75" fill="#2f990b" stroke="#d8fcc8"/>
<circle cx="719.0" cy="417.5" r="5.75" fill="#2f990b" stroke="#d8fcc8"/>
<circle cx="670.8" cy="426.7" r="5.75" fill="#2f990b" stroke="#d8fcc8"/>
<circle cx="760.0" cy="401.4" r="5.75" fill="#2f990b" stroke="#d8fcc8"/>
<circle cx="771.6" cy="407.6" r="5.75" fill="#2f990b" stroke="#d8fcc8"/>
<circle cx="769.9" cy="426.7" r="5.75" fill="#2f990b" stroke="#d8fcc8"/>
<circle cx="759.2" cy="406.7" r="5.75" fill="#2f990b" stroke="#d8fcc8"/>
<circle cx="780.6" cy="406.7" r="5.75" fill="#2f990b" stroke="#d8fcc8"/>
<circle cx="849.1" cy="290.4" r="5.75" fill="#2f990b" stroke="#d8fcc8"/>
<circle cx="858.1" cy="290.7" r="5.75" fill="#2f990b" stroke="#d8fcc8"/>
<circle cx="842.0" cy="295.2" r="5.75" fill="#2f990b" stroke="#d8fcc8"/>
<circle cx="847.3" cy="301.8" r="5.75" fill="#2f990b" stroke="#d8fcc8"/>
<circle cx="839.3" cy="320.7" r="5.75" fill="#2f990b" stroke="#d8fcc8"/>
<circle cx="848.2" cy="317.1" r="5.75" fill="#2f990b" stroke="#d8fcc8"/>
<circle cx="870.5" cy="315.2" r="5.75" fill="#2f990b" stroke="#d8fcc8"/>
<circle cx="886.3" cy="319.3" r="5.75" fill="#2f990b" stroke="#d8fcc8"/>
<circle cx="885.7" cy="326.8" r="5.75" fill="#2f990b" stroke="#d8fcc8"/>
<circle cx="898.2" cy="320.7" r="5.75" fill="#2f990b" stroke="#d8fcc8"/>
<circle cx="904.5" cy="327.3" r="5.75" fill="#2f990b" stroke="#d8fcc8"/>
<circle cx="892.0" cy="338.9" r="5.75" fill="#2f990b" stroke="#d8fcc8"/>
<circle cx="892.0" cy="346.9" r="5.75" fill="#2f990b" stroke="#d8fcc8"/>
<circle cx="923.2" cy="345.2" r="5.75" fill="#2f990b" stroke="#d8fcc8"/>
<circle cx="923.2" cy="352.3" r="5.75" fill="#2f990b" stroke="#d8fcc8"/>
<circle cx="934.8" cy="340.7" r="5.75" fill="#2f990b" stroke="#d8fcc8"/>
<circle cx="943.7" cy="334.4" r="5.75" fill="#2f990b" stroke="#d8fcc8"/>
<circle cx="948.7" cy="315.2" r="5.75" fill="#2f990b" stroke="#d8fcc8"/>
<circle cx="952.3" cy="325.5" r="5.75" fill="#2f990b" stroke="#d8fcc8"/>
<circle cx="979.4" cy="328.7" r="5.75" fill="#2f990b" stroke="#d8fcc8"/>
<circle cx="984.8" cy="339.8" r="5.75" fill="#2f990b" stroke="#d8fcc8"/>
<circle cx="991.0" cy="344.3" r="5.75" fill="#2f990b" stroke="#d8fcc8"/>
<circle cx="895.2" cy="367.8" r="5.75" fill="#2f990b" stroke="#d8fcc8"/>
<circle cx="890.2" cy="376.4" r="5.75" fill="#2f990b" stroke="#d8fcc8"/>
<circle cx="902.7" cy="375.5" r="5.75" fill="#2f990b" stroke="#d8fcc8"/>
<circle cx="911.6" cy="392.8" r="5.75" fill="#2f990b" stroke="#d8fcc8"/>
<circle cx="916.1" cy="399.6" r="5.75" fill="#2f990b" stroke="#d8fcc8"/>
<circle cx="864.3" cy="396.9" r="5.75" fill="#2f990b" stroke="#d8fcc8"/>
<circle cx="798.2" cy="400.0" r="5.75" fill="#2f990b" stroke="#d8fcc8"/>
<circle cx="845.6" cy="415.7" r="5.75" fill="#2f990b" stroke="#d8fcc8"/>
<circle cx="874.1" cy="415.7" r="5.75" fill="#2f990b" stroke="#d8fcc8"/>
<circle cx="850.0" cy="425.5" r="5.75" fill="#2f990b" stroke="#d8fcc8"/>
<circle cx="808.1" cy="422.8" r="5.75" fill="#2f990b" stroke="#d8fcc8"/>
<circle cx="975.9" cy="392.1" r="5.75" fill="#2f990b" stroke="#d8fcc8"/>
<circle cx="981.2" cy="396.4" r="5.75" fill="#2f990b" stroke="#d8fcc8"/>
<circle cx="991.9" cy="396.9" r="5.75" fill="#2f990b" stroke="#d8fcc8"/>
<circle cx="983.0" cy="404.1" r="5.75" fill="#2f990b" stroke="#d8fcc8"/>
<circle cx="967.8" cy="412.5" r="5.75" fill="#2f990b" stroke="#d8fcc8"/>
<circle cx="1021.4" cy="381.8" r="5.75" fill="#2f990b" stroke="#d8fcc8"/>
<circle cx="991.0" cy="388.9" r="5.75" fill="#2f990b" stroke="#d8fcc8"/>
<circle cx="1047.6" cy="379.3" r="5.75" fill="#2f990b" stroke="#d8fcc8"/>
<circle cx="515.3" cy="527.3" r="5.75" fill="#2f990b" stroke="#d8fcc8"/>
<circle cx="514.8" cy="548.7" r="5.75" fill="#2f990b" stroke="#d8fcc8"/>
<circle cx="523.7" cy="549.2" r="5.75" fill="#2f990b" stroke="#d8fcc8"/>
<circle cx="513.0" cy="557.6" r="5.75" fill="#2f990b" stroke="#d8fcc8"/>
<circle cx="670.8" cy="430.0" r="5.75" fill="#2f990b" stroke="#d8fcc8"/>
<circle cx="693.6" cy="439.8" r="5.75" fill="#2f990b" stroke="#d8fcc8"/>
<circle cx="744.0" cy="435.4" r="5.75" fill="#2f990b" stroke="#d8fcc8"/>
<circle cx="748.4" cy="445.7" r="5.75" fill="#2f990b" stroke="#d8fcc8"/>
<circle cx="757.4" cy="441.6" r="5.75" fill="#2f990b" stroke="#d8fcc8"/>
<circle cx="763.6" cy="442.1" r="5.75" fill="#2f990b" stroke="#d8fcc8"/>
<circle cx="780.6" cy="442.1" r="5.75" fill="#2f990b" stroke="#d8fcc8"/>
<circle cx="764.2" cy="457.1" r="5.75" fill="#2f990b" stroke="#d8fcc8"/>
<circle cx="632.0" cy="511.8" r="5.75" fill="#2f990b" stroke="#d8fcc8"/>
<circle cx="627.9" cy="518.4" r="5.75" fill="#2f990b" stroke="#d8fcc8"/>
<circle cx="623.8" cy="527.3" r="5.75" fill="#2f990b" stroke="#d8fcc8"/>
<circle cx="639.9" cy="531.2" r="5.75" fill="#2f990b" stroke="#d8fcc8"/>
<circle cx="642.2" cy="526.4" r="5.75" fill="#2f990b" stroke="#d8fcc8"/>
<circle cx="661.0" cy="544.6" r="5.75" fill="#2f990b" stroke="#d8fcc8"/>
<circle cx="602.6" cy="575.5" r="5.75" fill="#2f990b" stroke="#d8fcc8"/>
<circle cx="780.2" cy="550.5" r="5.75" fill="#2f990b" stroke="#d8fcc8"/>
<circle cx="791.3" cy="548.7" r="5.75" fill="#2f990b" stroke="#d8fcc8"/>
<circle cx="777.5" cy="562.5" r="5.75" fill="#2f990b" stroke="#d8fcc8"/>
<circle cx="791.3" cy="578.2" r="5.75" fill="#2f990b" stroke="#d8fcc8"/>
<circle cx="770.8" cy="430.9" r="5.75" fill="#2f990b" stroke="#d8fcc8"/>
<circle cx="966.1" cy="435.7" r="5.75" fill="#2f990b" stroke="#d8fcc8"/>
<circle cx="957.1" cy="439.8" r="5.75" fill="#2f990b" stroke="#d8fcc8"/>
<circle cx="958.0" cy="460.7" r="5.75" fill="#2f990b" stroke="#d8fcc8"/>
<circle cx="944.6" cy="468.9" r="5.75" fill="#2f990b" stroke="#d8fcc8"/>
<circle cx="808.4" cy="480.3" r="5.75" fill="#2f990b" stroke="#d8fcc8"/>
<circle cx="856.6" cy="473.7" r="5.75" fill="#2f990b" stroke="#d8fcc8"/>
<circle cx="864.3" cy="496.1" r="5.75" fill="#2f990b" stroke="#d8fcc8"/>
<circle cx="868.8" cy="510.3" r="5.75" fill="#2f990b" stroke="#d8fcc8"/>
<circle cx="979.4" cy="476.8" r="5.75" fill="#2f990b" stroke="#d8fcc8"/>
<circle cx="1001.2" cy="491.6" r="5.75" fill="#2f990b" stroke="#d8fcc8"/>
<circle cx="997.3" cy="497.8" r="5.75" fill="#2f990b" stroke="#d8fcc8"/>
<circle cx="996.9" cy="504.1" r="5.75" fill="#2f990b" stroke="#d8fcc8"/>
<circle cx="1022.3" cy="522.8" r="5.75" fill="#2f990b" stroke="#d8fcc8"/>
<circle cx="993.4" cy="550.5" r="5.75" fill="#2f990b" stroke="#d8fcc8"/>
<circle cx="934.8" cy="552.3" r="5.75" fill="#2f990b" stroke="#d8fcc8"/>
<circle cx="948.6" cy="555.9" r="5.75" fill="#2f990b" stroke="#d8fcc8"/>
<circle cx="882.2" cy="562.1" r="5.75" fill="#2f990b" stroke="#d8fcc8"/>
<circle cx="879.5" cy="546.0" r="5.75" fill="#2f990b" stroke="#d8fcc8"/>
<circle cx="866.1" cy="570.1" r="5.75" fill="#2f990b" stroke="#d8fcc8"/>
<circle cx="794.7" cy="548.7" r="5.75" fill="#2f990b" stroke="#d8fcc8"/>
<circle cx="804.5" cy="542.5" r="5.75" fill="#2f990b" stroke="#d8fcc8"/>
<circle cx="813.4" cy="549.6" r="5.75" fill="#2f990b" stroke="#d8fcc8"/>
<circle cx="826.8" cy="559.4" r="5.75" fill="#2f990b" stroke="#d8fcc8"/>
<circle cx="834.8" cy="550.5" r="5.75" fill="#2f990b" stroke="#d8fcc8"/>
<circle cx="829.5" cy="571.9" r="5.75" fill="#2f990b" stroke="#d8fcc8"/>
<circle cx="816.1" cy="578.2" r="5.75" fill="#2f990b" stroke="#d8fcc8"/>
<circle cx="955.3" cy="571.0" r="5.75" fill="#2f990b" stroke="#d8fcc8"/>
<circle cx="946.4" cy="578.2" r="5.75" fill="#2f990b" stroke="#d8fcc8"/>
<circle cx="852.7" cy="431.8" r="5.75" fill="#2f990b" stroke="#d8fcc8"/>
<circle cx="939.3" cy="531.8" r="5.75" fill="#2f990b" stroke="#d8fcc8"/>
<circle cx="903.6" cy="533.5" r="5.75" fill="#2f990b" stroke="#d8fcc8"/>
<circle cx="979.4" cy="519.3" r="5.75" fill="#2f990b" stroke="#d8fcc8"/>
<circle cx="949.1" cy="519.3" r="5.75" fill="#2f990b" stroke="#d8fcc8"/>
<circle cx="884.8" cy="508.5" r="5.75" fill="#2f990b" stroke="#d8fcc8"/>
<circle cx="958.0" cy="490.7" r="5.75" fill="#2f990b" stroke="#d8fcc8"/>
<circle cx="834.0" cy="515.7" r="5.75" fill="#2f990b" stroke="#d8fcc8"/>
<circle cx="445.1" cy="642.1" r="5.75" fill="#2f990b" stroke="#d8fcc8"/>
<circle cx="546.5" cy="623.2" r="5.75" fill="#2f990b" stroke="#d8fcc8"/>
<circle cx="649.0" cy="665.2" r="5.75" fill="#2f990b" stroke="#d8fcc8"/>
<circle cx="791.3" cy="669.3" r="5.75" fill="#2f990b" stroke="#d8fcc8"/>
<circle cx="816.1" cy="580.9" r="5.75" fill="#2f990b" stroke="#d8fcc8"/>
<circle cx="795.6" cy="593.4" r="5.75" fill="#2f990b" stroke="#d8fcc8"/>
<circle cx="807.2" cy="589.8" r="5.75" fill="#2f990b" stroke="#d8fcc8"/>
<circle cx="804.9" cy="598.7" r="5.75" fill="#2f990b" stroke="#d8fcc8"/>
<circle cx="816.1" cy="606.8" r="5.75" fill="#2f990b" stroke="#d8fcc8"/>
<circle cx="824.1" cy="601.1" r="5.75" fill="#2f990b" stroke="#d8fcc8"/>
<circle cx="821.5" cy="594.3" r="5.75" fill="#2f990b" stroke="#d8fcc8"/>
<circle cx="826.5" cy="613.0" r="5.75" fill="#2f990b" stroke="#d8fcc8"/>
<circle cx="832.2" cy="610.3" r="5.75" fill="#2f990b" stroke="#d8fcc8"/>
<circle cx="839.3" cy="602.9" r="5.75" fill="#2f990b" stroke="#d8fcc8"/>
<circle cx="848.2" cy="598.7" r="5.75" fill="#2f990b" stroke="#d8fcc8"/>
<circle cx="845.6" cy="611.8" r="5.75" fill="#2f990b" stroke="#d8fcc8"/>
<circle cx="857.7" cy="595.2" r="5.75" fill="#2f990b" stroke="#d8fcc8"/>
<circle cx="857.7" cy="604.1" r="5.75" fill="#2f990b" stroke="#d8fcc8"/>
<circle cx="882.2" cy="587.5" r="5.75" fill="#2f990b" stroke="#d8fcc8"/>
<circle cx="889.3" cy="588.9" r="5.75" fill="#2f990b" stroke="#d8fcc8"/>
<circle cx="880.4" cy="614.8" r="5.75" fill="#2f990b" stroke="#d8fcc8"/>
<circle cx="873.2" cy="616.6" r="5.75" fill="#2f990b" stroke="#d8fcc8"/>
<circle cx="887.5" cy="621.1" r="5.75" fill="#2f990b" stroke="#d8fcc8"/>
<circle cx="892.0" cy="625.5" r="5.75" fill="#2f990b" stroke="#d8fcc8"/>
<circle cx="889.8" cy="633.0" r="5.75" fill="#2f990b" stroke="#d8fcc8"/>
<circle cx="915.2" cy="632.3" r="5.75" fill="#2f990b" stroke="#d8fcc8"/>
<circle cx="908.9" cy="638.6" r="5.75" fill="#2f990b" stroke="#d8fcc8"/>
<circle cx="900.9" cy="644.3" r="5.75" fill="#2f990b" stroke="#d8fcc8"/>
<circle cx="909.3" cy="649.6" r="5.75" fill="#2f990b" stroke="#d8fcc8"/>
<circle cx="890.2" cy="651.4" r="5.75" fill="#2f990b" stroke="#d8fcc8"/>
<circle cx="930.9" cy="628.2" r="5.75" fill="#2f990b" stroke="#d8fcc8"/>
<circle cx="954.1" cy="605.0" r="5.75" fill="#2f990b" stroke="#d8fcc8"/>
<circle cx="946.4" cy="580.9" r="5.75" fill="#2f990b" stroke="#d8fcc8"/>
<circle cx="939.3" cy="581.8" r="5.75" fill="#2f990b" stroke="#d8fcc8"/>
<circle cx="966.1" cy="581.8" r="5.75" fill="#2f990b" stroke="#d8fcc8"/>
<circle cx="763.6" cy="217.8" r="5.7" fill="#f00606" stroke="#ffe4de"/>
<circle cx="759.7" cy="237.5" r="5.7" fill="#f00606" stroke="#ffe4de"/>
<circle cx="812.2" cy="213.9" r="5.7" fill="#f00606" stroke="#ffe4de"/>
<circle cx="854.8" cy="279.1" r="5.7" fill="#f00606" stroke="#ffe4de"/>
<circle cx="522.8" cy="424.2" r="5.7" fill="#f00606" stroke="#ffe4de"/>
<circle cx="559.4" cy="356.4" r="5.7" fill="#f00606" stroke="#ffe4de"/>
<circle cx="560.3" cy="370.2" r="5.7" fill="#f00606" stroke="#ffe4de"/>
<circle cx="560.3" cy="391.6" r="5.7" fill="#f00606" stroke="#ffe4de"/>
<circle cx="557.6" cy="408.5" r="5.7" fill="#f00606" stroke="#ffe4de"/>
<circle cx="612.4" cy="293.9" r="5.7" fill="#f00606" stroke="#ffe4de"/>
<circle cx="607.1" cy="288.6" r="5.7" fill="#f00606" stroke="#ffe4de"/>
<circle cx="647.6" cy="299.6" r="5.7" fill="#f00606" stroke="#ffe4de"/>
<circle cx="639.5" cy="301.4" r="5.7" fill="#f00606" stroke="#ffe4de"/>
<circle cx="561.9" cy="356.8" r="5.7" fill="#f00606" stroke="#ffe4de"/>
<circle cx="575.3" cy="358.0" r="5.7" fill="#f00606" stroke="#ffe4de"/>
<circle cx="577.4" cy="367.1" r="5.7" fill="#f00606" stroke="#ffe4de"/>
<circle cx="562.8" cy="369.3" r="5.7" fill="#f00606" stroke="#ffe4de"/>
<circle cx="572.6" cy="373.7" r="5.7" fill="#f00606" stroke="#ffe4de"/>
<circle cx="575.3" cy="383.5" r="5.7" fill="#f00606" stroke="#ffe4de"/>
<circle cx="562.8" cy="391.0" r="5.7" fill="#f00606" stroke="#ffe4de"/>
<circle cx="569.9" cy="390.7" r="5.7" fill="#f00606" stroke="#ffe4de"/>
<circle cx="577.1" cy="396.4" r="5.7" fill="#f00606" stroke="#ffe4de"/>
<circle cx="583.3" cy="404.4" r="5.7" fill="#f00606" stroke="#ffe4de"/>
<circle cx="625.8" cy="417.8" r="5.7" fill="#f00606" stroke="#ffe4de"/>
<circle cx="748.4" cy="415.7" r="5.7" fill="#f00606" stroke="#ffe4de"/>
<circle cx="763.6" cy="414.2" r="5.7" fill="#f00606" stroke="#ffe4de"/>
<circle cx="777.0" cy="415.7" r="5.7" fill="#f00606" stroke="#ffe4de"/>
<circle cx="790.4" cy="414.2" r="5.7" fill="#f00606" stroke="#ffe4de"/>
<circle cx="754.7" cy="425.5" r="5.7" fill="#f00606" stroke="#ffe4de"/>
<circle cx="786.8" cy="427.3" r="5.7" fill="#f00606" stroke="#ffe4de"/>
<circle cx="561.9" cy="408.5" r="5.7" fill="#f00606" stroke="#ffe4de"/>
<circle cx="854.8" cy="281.4" r="5.7" fill="#f00606" stroke="#ffe4de"/>
<circle cx="933.0" cy="330.5" r="5.7" fill="#f00606" stroke="#ffe4de"/>
<circle cx="907.7" cy="352.3" r="5.7" fill="#f00606" stroke="#ffe4de"/>
<circle cx="878.6" cy="371.6" r="5.7" fill="#f00606" stroke="#ffe4de"/>
<circle cx="901.8" cy="383.2" r="5.7" fill="#f00606" stroke="#ffe4de"/>
<circle cx="884.5" cy="388.9" r="5.7" fill="#f00606" stroke="#ffe4de"/>
<circle cx="874.5" cy="396.4" r="5.7" fill="#f00606" stroke="#ffe4de"/>
<circle cx="872.3" cy="389.3" r="5.7" fill="#f00606" stroke="#ffe4de"/>
<circle cx="896.4" cy="394.3" r="5.7" fill="#f00606" stroke="#ffe4de"/>
<circle cx="892.3" cy="400.0" r="5.7" fill="#f00606" stroke="#ffe4de"/>
<circle cx="877.3" cy="406.7" r="5.7" fill="#f00606" stroke="#ffe4de"/>
<circle cx="888.4" cy="408.5" r="5.7" fill="#f00606" stroke="#ffe4de"/>
<circle cx="853.2" cy="402.6" r="5.7" fill="#f00606" stroke="#ffe4de"/>
<circle cx="847.3" cy="407.6" r="5.7" fill="#f00606" stroke="#ffe4de"/>
<circle cx="860.7" cy="407.1" r="5.7" fill="#f00606" stroke="#ffe4de"/>
<circle cx="865.5" cy="415.7" r="5.7" fill="#f00606" stroke="#ffe4de"/>
<circle cx="858.9" cy="421.9" r="5.7" fill="#f00606" stroke="#ffe4de"/>
<circle cx="804.9" cy="410.7" r="5.7" fill="#f00606" stroke="#ffe4de"/>
<circle cx="792.9" cy="414.8" r="5.7" fill="#f00606" stroke="#ffe4de"/>
<circle cx="799.1" cy="425.5" r="5.7" fill="#f00606" stroke="#ffe4de"/>
<circle cx="993.4" cy="381.2" r="5.7" fill="#f00606" stroke="#ffe4de"/>
<circle cx="528.7" cy="494.3" r="5.7" fill="#f00606" stroke="#ffe4de"/>
<circle cx="537.1" cy="528.7" r="5.7" fill="#f00606" stroke="#ffe4de"/>
<circle cx="530.3" cy="537.1" r="5.7" fill="#f00606" stroke="#ffe4de"/>
<circle cx="521.9" cy="538.9" r="5.7" fill="#f00606" stroke="#ffe4de"/>
<circle cx="760.0" cy="432.7" r="5.7" fill="#f00606" stroke="#ffe4de"/>
<circle cx="786.8" cy="451.4" r="5.7" fill="#f00606" stroke="#ffe4de"/>
<circle cx="668.6" cy="509.4" r="5.7" fill="#f00606" stroke="#ffe4de"/>
<circle cx="791.3" cy="568.4" r="5.7" fill="#f00606" stroke="#ffe4de"/>
<circle cx="782.4" cy="431.8" r="5.7" fill="#f00606" stroke="#ffe4de"/>
<circle cx="798.8" cy="461.2" r="5.7" fill="#f00606" stroke="#ffe4de"/>
<circle cx="819.7" cy="460.3" r="5.7" fill="#f00606" stroke="#ffe4de"/>
<circle cx="825.9" cy="466.6" r="5.7" fill="#f00606" stroke="#ffe4de"/>
<circle cx="834.0" cy="476.4" r="5.7" fill="#f00606" stroke="#ffe4de"/>
<circle cx="843.8" cy="476.4" r="5.7" fill="#f00606" stroke="#ffe4de"/>
<circle cx="827.7" cy="490.7" r="5.7" fill="#f00606" stroke="#ffe4de"/>
<circle cx="841.6" cy="496.1" r="5.7" fill="#f00606" stroke="#ffe4de"/>
<circle cx="849.5" cy="489.8" r="5.7" fill="#f00606" stroke="#ffe4de"/>
<circle cx="853.6" cy="496.9" r="5.7" fill="#f00606" stroke="#ffe4de"/>
<circle cx="854.5" cy="507.1" r="5.7" fill="#f00606" stroke="#ffe4de"/>
<circle cx="843.4" cy="512.1" r="5.7" fill="#f00606" stroke="#ffe4de"/>
<circle cx="857.2" cy="521.4" r="5.7" fill="#f00606" stroke="#ffe4de"/>
<circle cx="850.9" cy="527.8" r="5.7" fill="#f00606" stroke="#ffe4de"/>
<circle cx="867.0" cy="521.9" r="5.7" fill="#f00606" stroke="#ffe4de"/>
<circle cx="842.3" cy="531.8" r="5.7" fill="#f00606" stroke="#ffe4de"/>
<circle cx="860.7" cy="464.8" r="5.7" fill="#f00606" stroke="#ffe4de"/>
<circle cx="866.1" cy="482.7" r="5.7" fill="#f00606" stroke="#ffe4de"/>
<circle cx="874.5" cy="459.1" r="5.7" fill="#f00606" stroke="#ffe4de"/>
<circle cx="872.3" cy="467.5" r="5.7" fill="#f00606" stroke="#ffe4de"/>
<circle cx="878.6" cy="478.2" r="5.7" fill="#f00606" stroke="#ffe4de"/>
<circle cx="876.8" cy="489.8" r="5.7" fill="#f00606" stroke="#ffe4de"/>
<circle cx="876.3" cy="502.3" r="5.7" fill="#f00606" stroke="#ffe4de"/>
<circle cx="876.3" cy="517.5" r="5.7" fill="#f00606" stroke="#ffe4de"/>
<circle cx="883.9" cy="494.3" r="5.7" fill="#f00606" stroke="#ffe4de"/>
<circle cx="884.8" cy="454.1" r="5.7" fill="#f00606" stroke="#ffe4de"/>
<circle cx="892.0" cy="449.6" r="5.7" fill="#f00606" stroke="#ffe4de"/>
<circle cx="884.8" cy="466.6" r="5.7" fill="#f00606" stroke="#ffe4de"/>
<circle cx="904.8" cy="456.8" r="5.7" fill="#f00606" stroke="#ffe4de"/>
<circle cx="894.6" cy="478.6" r="5.7" fill="#f00606" stroke="#ffe4de"/>
<circle cx="905.7" cy="471.1" r="5.7" fill="#f00606" stroke="#ffe4de"/>
<circle cx="905.4" cy="488.0" r="5.7" fill="#f00606" stroke="#ffe4de"/>
<circle cx="901.8" cy="465.7" r="5.7" fill="#f00606" stroke="#ffe4de"/>
<circle cx="915.2" cy="486.2" r="5.7" fill="#f00606" stroke="#ffe4de"/>
<circle cx="919.6" cy="470.7" r="5.7" fill="#f00606" stroke="#ffe4de"/>
<circle cx="919.6" cy="496.1" r="5.7" fill="#f00606" stroke="#ffe4de"/>
<circle cx="929.1" cy="478.2" r="5.7" fill="#f00606" stroke="#ffe4de"/>
<circle cx="931.2" cy="488.4" r="5.7" fill="#f00606" stroke="#ffe4de"/>
<circle cx="921.4" cy="505.9" r="5.7" fill="#f00606" stroke="#ffe4de"/>
<circle cx="934.8" cy="503.5" r="5.7" fill="#f00606" stroke="#ffe4de"/>
<circle cx="942.8" cy="490.7" r="5.7" fill="#f00606" stroke="#ffe4de"/>
<circle cx="948.7" cy="501.9" r="5.7" fill="#f00606" stroke="#ffe4de"/>
<circle cx="942.8" cy="512.1" r="5.7" fill="#f00606" stroke="#ffe4de"/>
<circle cx="946.4" cy="529.1" r="5.7" fill="#f00606" stroke="#ffe4de"/>
<circle cx="946.4" cy="536.2" r="5.7" fill="#f00606" stroke="#ffe4de"/>
<circle cx="964.3" cy="515.3" r="5.7" fill="#f00606" stroke="#ffe4de"/>
<circle cx="966.1" cy="488.6" r="5.7" fill="#f00606" stroke="#ffe4de"/>
<circle cx="971.4" cy="483.6" r="5.7" fill="#f00606" stroke="#ffe4de"/>
<circle cx="979.4" cy="496.1" r="5.7" fill="#f00606" stroke="#ffe4de"/>
<circle cx="986.6" cy="496.1" r="5.7" fill="#f00606" stroke="#ffe4de"/>
<circle cx="979.4" cy="509.4" r="5.7" fill="#f00606" stroke="#ffe4de"/>
<circle cx="981.6" cy="468.9" r="5.7" fill="#f00606" stroke="#ffe4de"/>
<circle cx="991.0" cy="533.0" r="5.7" fill="#f00606" stroke="#ffe4de"/>
<circle cx="1021.0" cy="513.4" r="5.7" fill="#f00606" stroke="#ffe4de"/>
<circle cx="884.5" cy="537.1" r="5.7" fill="#f00606" stroke="#ffe4de"/>
<circle cx="894.6" cy="536.2" r="5.7" fill="#f00606" stroke="#ffe4de"/>
<circle cx="895.9" cy="544.6" r="5.7" fill="#f00606" stroke="#ffe4de"/>
<circle cx="915.2" cy="544.6" r="5.7" fill="#f00606" stroke="#ffe4de"/>
<circle cx="908.0" cy="545.1" r="5.7" fill="#f00606" stroke="#ffe4de"/>
<circle cx="923.2" cy="556.4" r="5.7" fill="#f00606" stroke="#ffe4de"/>
<circle cx="942.8" cy="567.8" r="5.7" fill="#f00606" stroke="#ffe4de"/>
<circle cx="959.8" cy="576.4" r="5.7" fill="#f00606" stroke="#ffe4de"/>
<circle cx="867.0" cy="552.3" r="5.7" fill="#f00606" stroke="#ffe4de"/>
<circle cx="850.9" cy="558.2" r="5.7" fill="#f00606" stroke="#ffe4de"/>
<circle cx="858.1" cy="561.2" r="5.7" fill="#f00606" stroke="#ffe4de"/>
<circle cx="868.8" cy="561.2" r="5.7" fill="#f00606" stroke="#ffe4de"/>
<circle cx="812.0" cy="541.0" r="5.7" fill="#f00606" stroke="#ffe4de"/>
<circle cx="822.0" cy="544.6" r="5.7" fill="#f00606" stroke="#ffe4de"/>
<circle cx="820.0" cy="566.0" r="5.7" fill="#f00606" stroke="#ffe4de"/>
<circle cx="793.8" cy="568.4" r="5.7" fill="#f00606" stroke="#ffe4de"/>
<circle cx="872.3" cy="575.5" r="5.7" fill="#f00606" stroke="#ffe4de"/>
<circle cx="799.1" cy="430.0" r="5.7" fill="#f00606" stroke="#ffe4de"/>
</g>
</svg>
<div class="abs" style="left:842px;top:11.5px;width:65px;height:65px;background:#333;box-shadow:0 0 0 1.5px rgba(255,255,255,.55),0 0 3px 1px rgba(255,255,255,.4)"><svg width="65" height="65" viewBox="1172 141.5 65 65"><path d="M1191.7 188.6V173.7L1195.3 169.3V158.6H1199.7V163.6L1204.7 158.2L1218.5 172.8L1216.7 174.6V188.6H1209.5V176.8H1199.7V188.6Z" fill="none" stroke="#b4b4b4" stroke-width="1.7" stroke-linejoin="miter"/></svg></div>
<div class="abs" style="left:849.5px;top:441px;width:59.5px;height:111px;background:#333;box-shadow:0 0 0 1.5px rgba(255,255,255,.5),0 0 3px 1px rgba(255,255,255,.4)"><svg width="60" height="111" viewBox="0 0 60 111"><path d="M17 26.5H42M29.5 14V39M17 79H42" stroke="#bdbdbd" stroke-width="3" fill="none"/></svg></div>
<div class="abs" style="left:489px;top:563px;width:413px;height:28px;background:rgba(255,255,255,.68);color:#555;font-size:23.5px;line-height:28px;padding-left:8px;white-space:nowrap;letter-spacing:1.1px">Map from Lands Department | ...</div>
</div>
<div id="list" class="abs">
  <div class="dot" style="top:21.5px;background:#f00"></div>
  <div class="leg" style="top:22.5px">14天內居住 / 到訪過的建築物</div>
  <div class="dot" style="top:65.5px;background:#3faa10"></div>
  <div class="leg" style="top:66px">超過14天居住 / 到訪過的建築物</div>
  <div class="row" style="top:106px"><b>個案 1589:</b> 男&nbsp; 21歲&nbsp; 15/07/2020 確診</div>
  <div class="row" style="top:163px"><b>個案 1588:</b> 女&nbsp; 19歲&nbsp; 15/07/2020 確診</div>
  <div class="row" style="top:220px"><b>個案 1587:</b> 女&nbsp; 17歲&nbsp; 15/07/2020 確診</div>
  <div class="row" style="top:277px"><b>個案 1586:</b> 男&nbsp; 66歲&nbsp; 15/07/2020 確診</div>
  <div class="row" style="top:334px"><b>個案 1585:</b> 男&nbsp; 59歲&nbsp; 15/07/2020 確診</div>
  <div class="abs" style="left:909px;top:0;width:13px;height:354px;background:#3d3d3d"></div>
  <div class="abs" style="left:909px;top:20px;width:13px;height:81px;background:#5c5c5c"></div>
  <div class="abs" style="left:909px;top:106px;width:13px;height:31px;background:#5c5c5c"></div>
</div>
<div id="tab" class="abs">
  <div class="c" style="top:8px;font-size:24px;line-height:32px;color:#969696">個案詳情</div>
  <svg class="abs" style="left:16px;top:10px" width="20" height="30" viewBox="0 0 20 30"><path d="M15.5 3 L3.5 15 L15.5 27 Z" fill="none" stroke="#aaa" stroke-width="2"/></svg>
  <svg class="abs" style="left:884px;top:10px" width="20" height="30" viewBox="0 0 20 30"><path d="M4.5 3 L16.5 15 L4.5 27 Z" fill="none" stroke="#aaa" stroke-width="2"/></svg>
</div>
<svg class="abs" style="left:1233px;top:741px" width="37" height="37" viewBox="-18.5 -18.5 37 37">
<circle r="17" fill="#333" stroke="#9a9a9a" stroke-width="1.6"/>
<g stroke="#b4b4b4" stroke-width="1.7" fill="none">
<path d="M-2.6 -2.6L-8.2 -8.2M-8.4 -4V-8.4H-4"/><path d="M2.6 -2.6L8.2 -8.2M8.4 -4V-8.4H4"/><path d="M-2.6 2.6L-8.2 8.2M-8.4 4V8.4H-4"/><path d="M2.6 2.6L8.2 8.2M8.4 4V8.4H4"/>
</g></svg>
</body>
</html>
